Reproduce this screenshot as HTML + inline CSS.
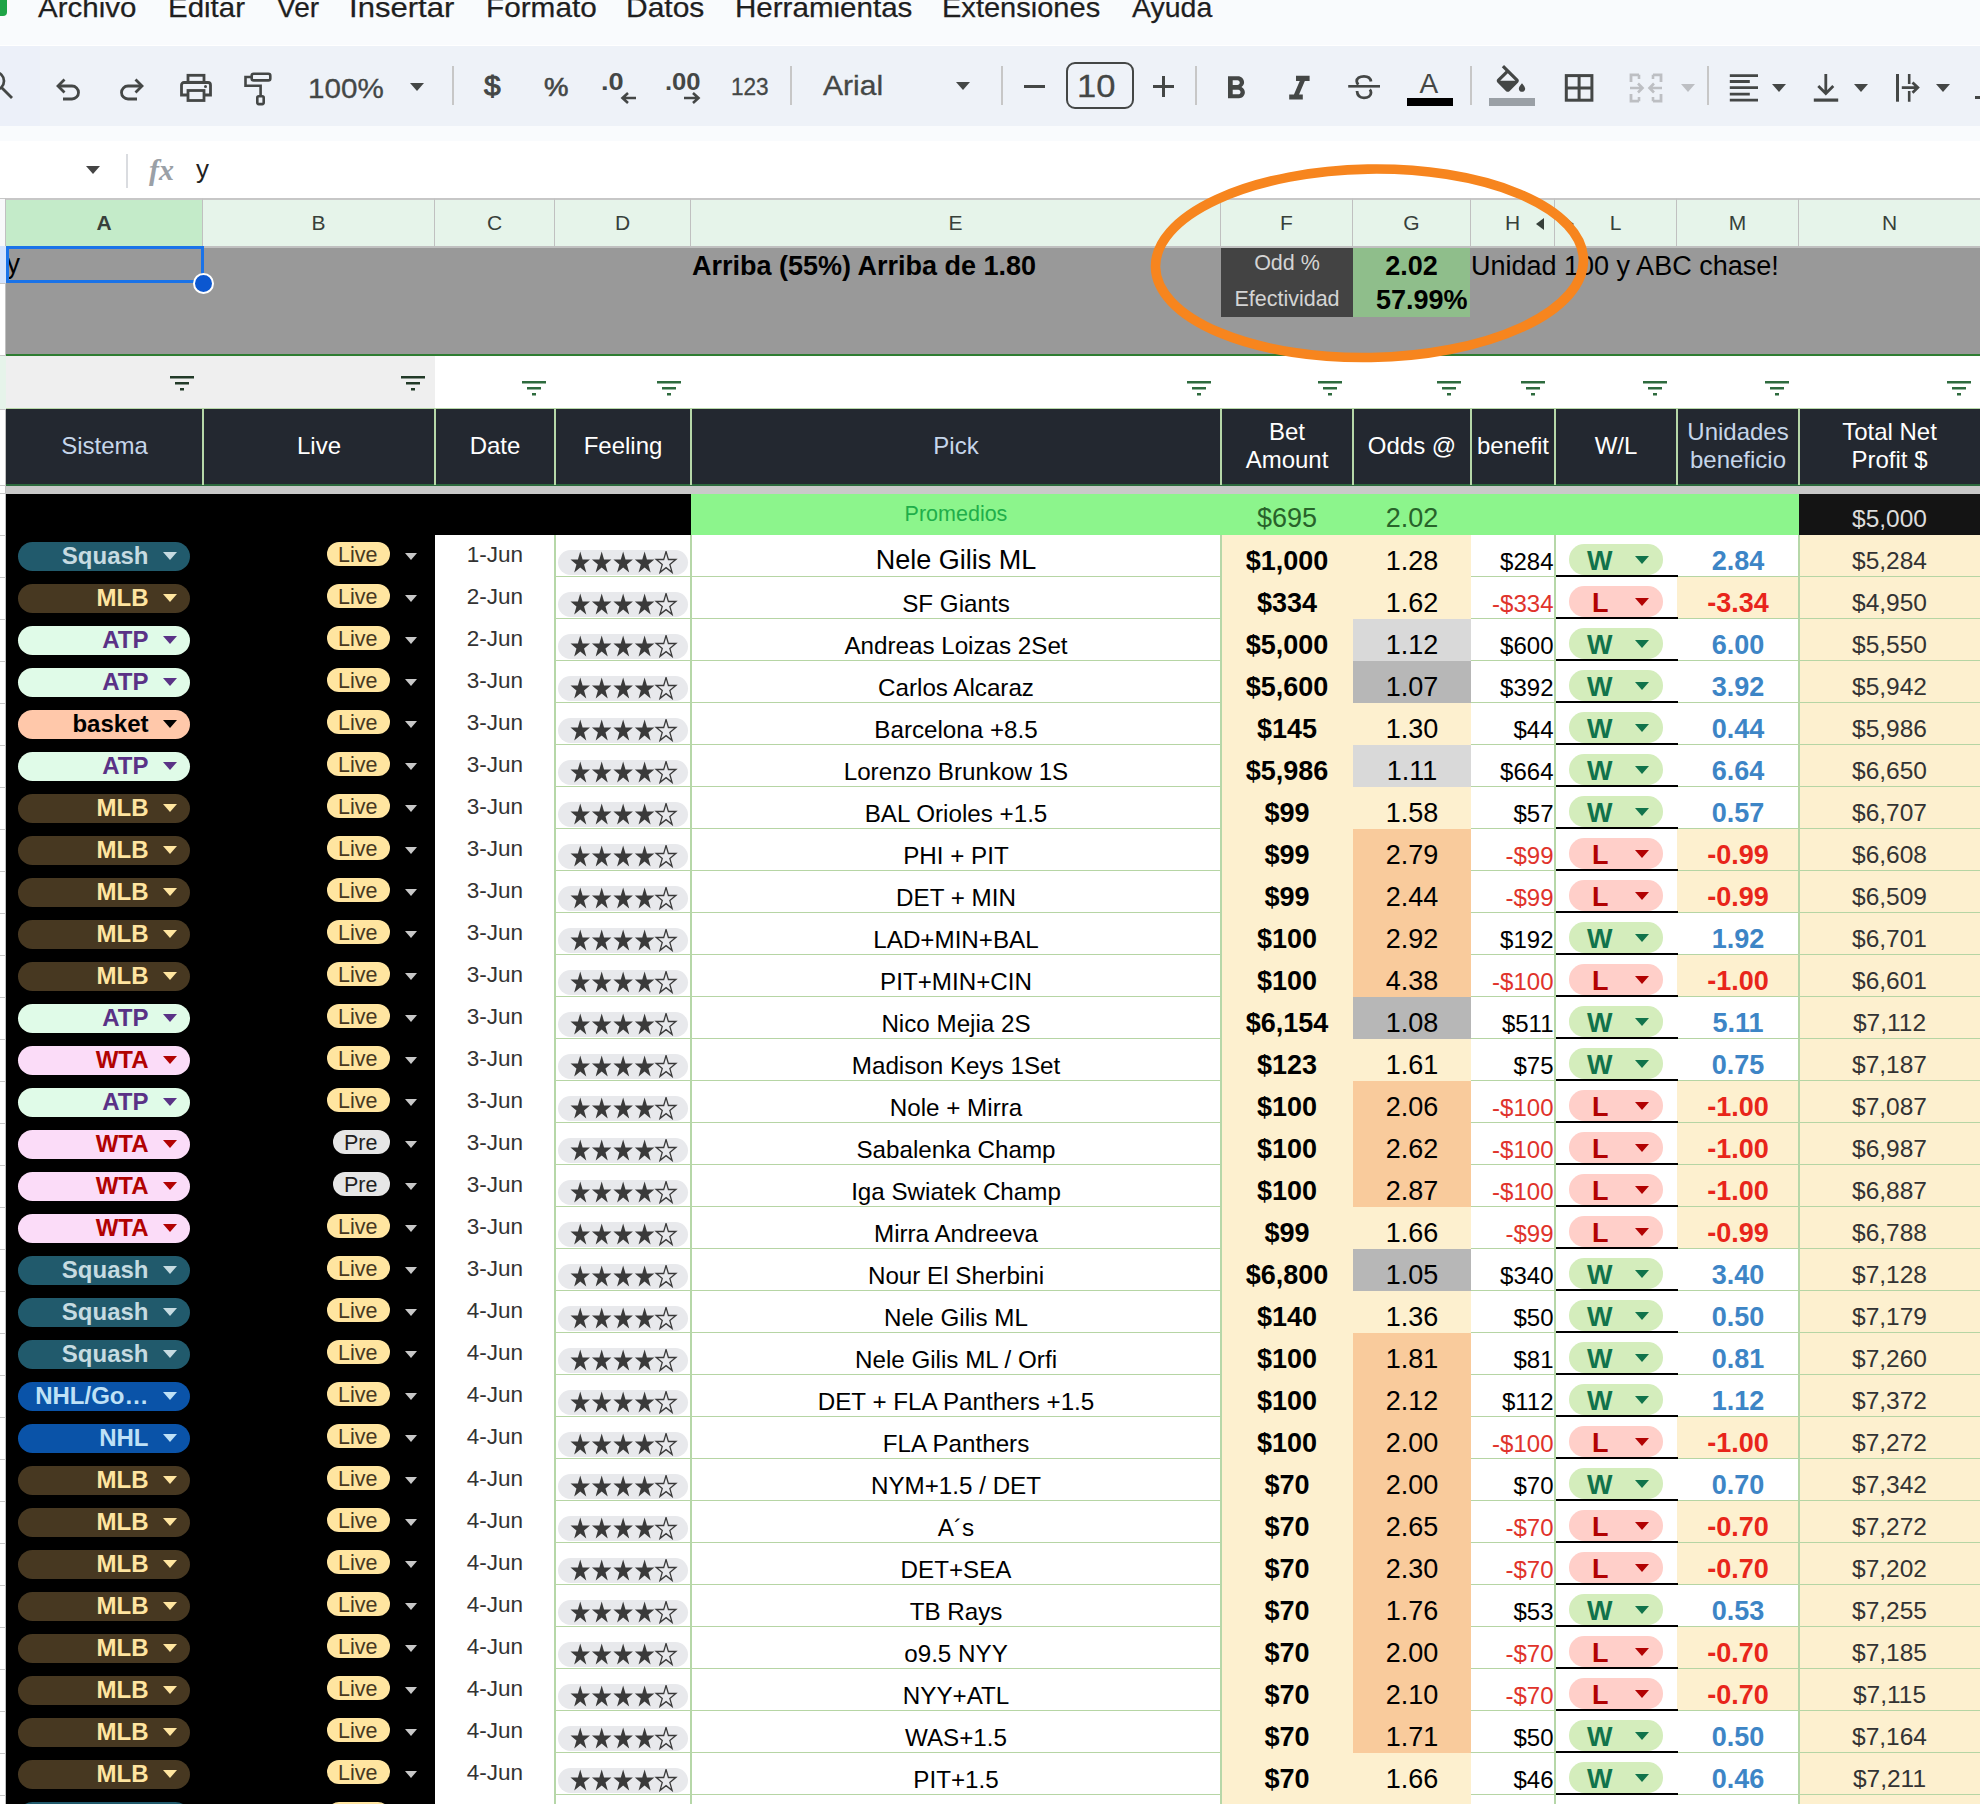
<!DOCTYPE html><html><head><meta charset="utf-8"><style>
*{box-sizing:border-box;margin:0;padding:0}
html,body{width:1980px;height:1804px;overflow:hidden;background:#fff}
body{position:relative;font-family:"Liberation Sans",sans-serif;color:#000}
.a{position:absolute}
.t{position:absolute;white-space:nowrap;line-height:1}
.menu{left:0;top:0;width:1980px;height:45px;background:#f9fbfd}
.tool{left:0;top:46px;width:1980px;height:79.5px;background:#eef2f8}
.gap{left:0;top:125.5px;width:1980px;height:15.5px;background:#f9fbfd}
.fbar{left:0;top:141px;width:1980px;height:57px;background:#fff}
.mi{top:-6.5px;font-size:28px;color:#1f1f1f;-webkit-text-stroke:0.25px #1f1f1f}
.sep{width:2px;background:#c7c7c7}
.ico{position:absolute}
.colh{top:198px;height:50px;background:#e6f4ea;border-top:2px solid #c7c7c7;border-bottom:2px solid #c0c0c0}
.colh span{position:absolute;left:0;right:0;top:12.2px;text-align:center;font-size:21px;color:#37403a;line-height:1}
.hd{top:409px;height:76px;background:#232830}
.hdt{position:absolute;left:0;right:0;text-align:center;font-size:24px;line-height:28px;color:#fff}
.pill{position:absolute;border-radius:16px}
.tri{position:absolute;width:0;height:0;border-left:7px solid transparent;border-right:7px solid transparent;border-top:8px solid}
.cell{position:absolute;text-align:center;white-space:nowrap;line-height:1}
</style></head><body><div class="a menu"></div>
<div class="a" style="left:0;top:0;width:7px;height:16px;background:#1ea446;border-radius:0 0 4px 0"></div>
<div class="t mi" style="left:38.30px;transform-origin:0 0;transform:scaleX(1.0543)">Archivo</div>
<div class="t mi" style="left:167.90px;transform-origin:0 0;transform:scaleX(1.0521)">Editar</div>
<div class="t mi" style="left:277.00px;transform-origin:0 0;transform:scaleX(1.0000)">Ver</div>
<div class="t mi" style="left:349.37px;transform-origin:0 0;transform:scaleX(1.1088)">Insertar</div>
<div class="t mi" style="left:485.58px;transform-origin:0 0;transform:scaleX(1.0624)">Formato</div>
<div class="t mi" style="left:626.46px;transform-origin:0 0;transform:scaleX(1.0714)">Datos</div>
<div class="t mi" style="left:734.69px;transform-origin:0 0;transform:scaleX(1.0552)">Herramientas</div>
<div class="t mi" style="left:942.43px;transform-origin:0 0;transform:scaleX(1.0369)">Extensiones</div>
<div class="t mi" style="left:1132.30px;transform-origin:0 0;transform:scaleX(1.0177)">Ayuda</div>
<div class="a tool"></div>
<div class="a gap"></div>
<div class="a" style="left:0;top:46px;width:40px;height:79.5px;background:#ecf0f9"></div>
<svg class="ico" style="left:-19px;top:67px" width="40" height="40" viewBox="0 0 40 40"><circle cx="14" cy="14" r="9" fill="none" stroke="#444746" stroke-width="2.7"/><line x1="20.5" y1="20.5" x2="31" y2="31" stroke="#444746" stroke-width="2.8"/></svg>
<svg class="ico" style="left:55px;top:77px" width="27" height="24" viewBox="0 0 27 24"><path d="M3.5 9 H17 a6.5 6.5 0 0 1 0 13 H8" fill="none" stroke="#444746" stroke-width="2.8"/><path d="M9.5 2.5 L3 9 L9.5 15.5" fill="none" stroke="#444746" stroke-width="2.8"/></svg>
<svg class="ico" style="left:118px;top:77px" width="27" height="24" viewBox="0 0 27 24"><path d="M23.5 9 H10 a6.5 6.5 0 0 0 0 13 H19" fill="none" stroke="#444746" stroke-width="2.8"/><path d="M17.5 2.5 L24 9 L17.5 15.5" fill="none" stroke="#444746" stroke-width="2.8"/></svg>
<svg class="ico" style="left:179px;top:73px" width="34" height="30" viewBox="0 0 34 30"><rect x="9" y="2.3" width="16" height="7" fill="none" stroke="#444746" stroke-width="2.8"/><path d="M8 22 H2.5 V12 a2.5 2.5 0 0 1 2.5-2.5 H29 a2.5 2.5 0 0 1 2.5 2.5 V22 H26" fill="none" stroke="#444746" stroke-width="2.8"/><rect x="9" y="17.5" width="16" height="10" fill="none" stroke="#444746" stroke-width="2.8"/><circle cx="26.5" cy="13.5" r="1.5" fill="#444746"/></svg>
<svg class="ico" style="left:243px;top:71px" width="32" height="36" viewBox="0 0 32 36"><rect x="8.7" y="2.7" width="18.6" height="6.7" rx="2" fill="none" stroke="#444746" stroke-width="2.6"/><path d="M8.7 6 H2.5 V14.7 H17.6 V24" fill="none" stroke="#444746" stroke-width="2.6"/><rect x="14.3" y="25.3" width="6.4" height="7.8" rx="1.5" fill="none" stroke="#444746" stroke-width="2.6"/></svg>
<div class="t" style="left:307.88px;top:75px;font-size:28px;color:#444746;transform-origin:0 0;transform:scaleX(1.0580);-webkit-text-stroke:0.3px #444746">100%</div>
<div class="tri" style="left:410px;top:83px;border-top-color:#444746"></div>
<div class="a sep" style="left:452px;top:66px;height:39px"></div>
<div class="a sep" style="left:790px;top:66px;height:39px"></div>
<div class="a sep" style="left:1001px;top:66px;height:39px"></div>
<div class="a sep" style="left:1195px;top:66px;height:39px"></div>
<div class="a sep" style="left:1470px;top:66px;height:39px"></div>
<div class="a sep" style="left:1707px;top:66px;height:39px"></div>
<div class="t" style="left:483.89px;top:73px;font-size:27px;color:#444746;transform-origin:0 0;transform:scaleX(1.1077);-webkit-text-stroke:0.9px #444746">$</div>
<div class="t" style="left:543.90px;top:75px;font-size:25px;color:#444746;transform-origin:0 0;transform:scaleX(1.1000);-webkit-text-stroke:0.6px #444746">%</div>
<div class="t" style="left:601.14px;top:71px;font-size:23px;color:#444746;transform-origin:0 0;transform:scaleX(1.1812);font-weight:bold">.0</div>
<svg class="ico" style="left:620px;top:92px" width="18" height="12" viewBox="0 0 18 12"><path d="M16 6 H3 M8 1 L2.5 6 L8 11" fill="none" stroke="#444746" stroke-width="2.6"/></svg>
<div class="t" style="left:665.47px;top:71px;font-size:23px;color:#444746;transform-origin:0 0;transform:scaleX(1.1138);font-weight:bold">.00</div>
<svg class="ico" style="left:683px;top:92px" width="18" height="12" viewBox="0 0 18 12"><path d="M1 6 H15 M10 1 L15.5 6 L10 11" fill="none" stroke="#444746" stroke-width="2.6"/></svg>
<div class="t" style="left:730.82px;top:75px;font-size:24px;color:#444746;transform-origin:0 0;transform:scaleX(0.9405);-webkit-text-stroke:0.3px #444746">123</div>
<div class="t" style="left:823.00px;top:72px;font-size:28px;color:#444746;transform-origin:0 0;transform:scaleX(1.0741);-webkit-text-stroke:0.3px #444746">Arial</div>
<div class="tri" style="left:956px;top:82px;border-top-color:#444746"></div>
<div class="a" style="left:1024px;top:85px;width:21px;height:3px;background:#444746"></div>
<div class="a" style="left:1066px;top:62px;width:68px;height:47px;border:2px solid #444746;border-radius:9px"></div>
<div class="t" style="left:1077.26px;top:71px;font-size:31.5px;color:#444746;transform-origin:0 0;transform:scaleX(1.0968);-webkit-text-stroke:0.3px #444746">10</div>
<svg class="ico" style="left:1152px;top:75px" width="23" height="23" viewBox="0 0 23 23"><path d="M11.5 1 V22 M1 11.5 H22" stroke="#444746" stroke-width="3"/></svg>
<svg class="ico" style="left:1216.6px;top:69.6px" width="37.7" height="37.7" viewBox="0 0 24 24"><path fill="#444746" d="M15.6 10.79c.97-.67 1.65-1.77 1.65-2.79 0-2.26-1.75-4-4-4H7v14h7.04c2.09 0 3.710-1.7 3.71-3.79 0-1.52-.86-2.82-2.15-3.42zM10 6.5h3c.83 0 1.5.67 1.5 1.5s-.67 1.5-1.5 1.5h-3v-3zm3.5 9H10v-3h3.5c.83 0 1.5.67 1.5 1.5s-.67 1.5-1.5 1.5z"/></svg>
<svg class="ico" style="left:1279.4px;top:69.1px" width="40.8" height="40.8" viewBox="0 0 24 24"><path fill="#444746" d="M10 4v3h2.21l-3.42 8H6v3h8v-3h-2.21l3.42-8H18V4z"/></svg>
<svg class="ico" style="left:1346px;top:73px" width="36" height="30" viewBox="1346 73 36 30"><path d="M1371 81.5 C1370.5 78 1367.5 76.3 1364 76.3 C1359.5 76.3 1356.7 78.5 1356.7 81.3 C1356.7 82.8 1357.5 83.8 1358.5 84.5" fill="none" stroke="#444746" stroke-width="2.8"/><path d="M1357 91 C1357.3 95.5 1360.2 97.8 1364 97.8 C1368.3 97.8 1371 95.8 1371 92.8 C1371 91.3 1370.6 90.3 1369.8 89.5" fill="none" stroke="#444746" stroke-width="2.8"/><rect x="1348.2" y="85" width="31.8" height="2.6" fill="#444746"/></svg>
<div class="t" style="left:1419.5px;top:69.5px;font-size:28px;color:#444746">A</div>
<div class="a" style="left:1407px;top:98px;width:46px;height:8px;background:#000"></div>
<svg class="ico" style="left:1492px;top:65px" width="37.9" height="37.9" viewBox="0 0 24 24"><path fill="#444746" d="M16.56 8.94L7.62 0 6.21 1.41l2.38 2.38-5.15 5.15c-.59.59-.59 1.54 0 2.12l5.5 5.5c.29.29.68.44 1.06.44s.77-.15 1.06-.44l5.5-5.5c.59-.58.59-1.530 0-2.12zM5.21 10L10 5.21 14.79 10H5.21zM19 11.5s-2 2.17-2 3.5c0 1.1.9 2 2 2s2-.9 2-2c0-1.33-2-3.5-2-3.5z"/></svg>
<div class="a" style="left:1489px;top:98px;width:46px;height:8px;background:#9aa0a6"></div>
<svg class="ico" style="left:1564px;top:73px" width="30" height="30" viewBox="0 0 30 30"><rect x="2.3" y="2.6" width="25.6" height="24.6" fill="none" stroke="#444746" stroke-width="3"/><path d="M15.1 2.6 V27.2 M2.3 14.9 H27.9" stroke="#444746" stroke-width="3"/></svg>
<svg class="ico" style="left:1629px;top:73px" width="34" height="30" viewBox="0 0 34 30"><path d="M2 9 V1.8 H10 M2 21 V28.2 H10 M32 9 V1.8 H24 M32 21 V28.2 H24" fill="none" stroke="#bdbfc3" stroke-width="2.8"/><path d="M1 15 H13 M9 10.5 L13.5 15 L9 19.5 M33 15 H21 M25 10.5 L20.5 15 L25 19.5" fill="none" stroke="#bdbfc3" stroke-width="2.6"/><path d="M10 1.8 V6 M24 1.8 V6 M10 28.2 V24 M24 28.2 V24" stroke="#bdbfc3" stroke-width="2.6"/></svg>
<div class="tri" style="left:1680.5px;top:83.5px;border-left-width:7.5px;border-right-width:7.5px;border-top-color:#bdbfc3"></div>
<svg class="ico" style="left:1729px;top:73px" width="30" height="30" viewBox="0 0 30 30"><path d="M0.8 2.6 H29 M0.8 8.5 H20.8 M0.8 14.6 H29 M0.8 21.1 H20.8 M0.8 27.2 H29" stroke="#444746" stroke-width="2.8"/></svg>
<div class="tri" style="left:1772px;top:83.5px;border-left-width:7.9px;border-right-width:7.9px;border-top-color:#444746"></div>
<svg class="ico" style="left:1812px;top:72px" width="28" height="32" viewBox="0 0 28 32"><path d="M13.8 2 V21 M6.3 14 L13.8 21.5 L21.3 14" fill="none" stroke="#444746" stroke-width="2.8"/><path d="M1.8 28.1 H26.2" stroke="#444746" stroke-width="3.2"/></svg>
<div class="tri" style="left:1854px;top:83.5px;border-left-width:7.8px;border-right-width:7.8px;border-top-color:#444746"></div>
<svg class="ico" style="left:1893px;top:72px" width="30" height="32" viewBox="0 0 30 32"><path d="M4.5 2 V29.7" stroke="#444746" stroke-width="3"/><path d="M16.2 2 V12 M16.2 19 V29.7" stroke="#444746" stroke-width="2.6"/><path d="M8.8 15.6 H24.5 M19.5 10.5 L24.8 15.6 L19.5 20.7" fill="none" stroke="#444746" stroke-width="2.8"/></svg>
<div class="tri" style="left:1936px;top:83.5px;border-left-width:7.6px;border-right-width:7.6px;border-top-color:#444746"></div>
<div class="a" style="left:1975px;top:96px;width:5px;height:3px;background:#444746"></div>
<div class="a fbar"></div>
<div class="tri" style="left:86px;top:166px;border-top-color:#444"></div>
<div class="a" style="left:126px;top:154px;width:2px;height:34px;background:#dadce0"></div>
<div class="t" style="left:149px;top:155px;font-size:30px;color:#9aa0a6;font-family:'Liberation Serif',serif;font-style:italic;font-weight:bold">fx</div>
<div class="t" style="left:196px;top:156px;font-size:26px;color:#1f1f1f">y</div>
<div class="a" style="left:0;top:198px;width:6px;height:48px;background:#f8f9fa;border-right:1px solid #c0c0c0;border-top:1px solid #c7c7c7"></div>
<div class="a colh" style="left:6px;width:197px;background:#c4ebc9;border-right:1px solid #c0c0c0"><span style="font-weight:bold">A</span></div>
<div class="a colh" style="left:203px;width:232px;background:#e6f4ea;border-right:1px solid #c0c0c0"><span style="font-weight:normal">B</span></div>
<div class="a colh" style="left:435px;width:120px;background:#e6f4ea;border-right:1px solid #c0c0c0"><span style="font-weight:normal">C</span></div>
<div class="a colh" style="left:555px;width:136px;background:#e6f4ea;border-right:1px solid #c0c0c0"><span style="font-weight:normal">D</span></div>
<div class="a colh" style="left:691px;width:530px;background:#e6f4ea;border-right:1px solid #c0c0c0"><span style="font-weight:normal">E</span></div>
<div class="a colh" style="left:1221px;width:132px;background:#e6f4ea;border-right:1px solid #c0c0c0"><span style="font-weight:normal">F</span></div>
<div class="a colh" style="left:1353px;width:118px;background:#e6f4ea;border-right:1px solid #c0c0c0"><span style="font-weight:normal">G</span></div>
<div class="a colh" style="left:1471px;width:84px;background:#e6f4ea;border-right:1px solid #c0c0c0"><span style="font-weight:normal">H</span></div>
<div class="a colh" style="left:1555px;width:122px;background:#e6f4ea;border-right:1px solid #c0c0c0"><span style="font-weight:normal">L</span></div>
<div class="a colh" style="left:1677px;width:122px;background:#e6f4ea;border-right:1px solid #c0c0c0"><span style="font-weight:normal">M</span></div>
<div class="a colh" style="left:1799px;width:181px;background:#e6f4ea;border-right:0"><span style="font-weight:normal">N</span></div>
<div class="a" style="left:1536.3px;top:218px;width:0;height:0;border-top:6.4px solid transparent;border-bottom:6.4px solid transparent;border-right:8.2px solid #37403a"></div>
<div class="a" style="left:1566px;top:218px;width:0;height:0;border-top:6.4px solid transparent;border-bottom:6.4px solid transparent;border-left:8.2px solid #37403a"></div>
<div class="a" style="left:0;top:246px;width:6px;height:1558px;background:#fff;border-right:1px solid #c0c0c0"></div>
<div class="a" style="left:0;top:246px;width:6px;height:37px;background:#d3e3fd"></div>
<div class="a" style="left:0;top:355px;width:6px;height:54px;background:#e6f4ea"></div>
<div class="a" style="left:0;top:283px;width:6px;height:1px;background:#c7c7c7"></div>
<div class="a" style="left:0;top:355px;width:6px;height:1px;background:#c7c7c7"></div>
<div class="a" style="left:0;top:409px;width:6px;height:1px;background:#c7c7c7"></div>
<div class="a" style="left:0;top:485px;width:6px;height:1px;background:#c7c7c7"></div>
<div class="a" style="left:0;top:493px;width:6px;height:1px;background:#c7c7c7"></div>
<div class="a" style="left:0;top:535px;width:6px;height:1px;background:#c7c7c7"></div>
<div class="a" style="left:0;top:577px;width:6px;height:1px;background:#c7c7c7"></div>
<div class="a" style="left:0;top:619px;width:6px;height:1px;background:#c7c7c7"></div>
<div class="a" style="left:0;top:661px;width:6px;height:1px;background:#c7c7c7"></div>
<div class="a" style="left:0;top:703px;width:6px;height:1px;background:#c7c7c7"></div>
<div class="a" style="left:0;top:745px;width:6px;height:1px;background:#c7c7c7"></div>
<div class="a" style="left:0;top:787px;width:6px;height:1px;background:#c7c7c7"></div>
<div class="a" style="left:0;top:829px;width:6px;height:1px;background:#c7c7c7"></div>
<div class="a" style="left:0;top:871px;width:6px;height:1px;background:#c7c7c7"></div>
<div class="a" style="left:0;top:913px;width:6px;height:1px;background:#c7c7c7"></div>
<div class="a" style="left:0;top:955px;width:6px;height:1px;background:#c7c7c7"></div>
<div class="a" style="left:0;top:997px;width:6px;height:1px;background:#c7c7c7"></div>
<div class="a" style="left:0;top:1039px;width:6px;height:1px;background:#c7c7c7"></div>
<div class="a" style="left:0;top:1081px;width:6px;height:1px;background:#c7c7c7"></div>
<div class="a" style="left:0;top:1123px;width:6px;height:1px;background:#c7c7c7"></div>
<div class="a" style="left:0;top:1165px;width:6px;height:1px;background:#c7c7c7"></div>
<div class="a" style="left:0;top:1207px;width:6px;height:1px;background:#c7c7c7"></div>
<div class="a" style="left:0;top:1249px;width:6px;height:1px;background:#c7c7c7"></div>
<div class="a" style="left:0;top:1291px;width:6px;height:1px;background:#c7c7c7"></div>
<div class="a" style="left:0;top:1333px;width:6px;height:1px;background:#c7c7c7"></div>
<div class="a" style="left:0;top:1375px;width:6px;height:1px;background:#c7c7c7"></div>
<div class="a" style="left:0;top:1417px;width:6px;height:1px;background:#c7c7c7"></div>
<div class="a" style="left:0;top:1459px;width:6px;height:1px;background:#c7c7c7"></div>
<div class="a" style="left:0;top:1501px;width:6px;height:1px;background:#c7c7c7"></div>
<div class="a" style="left:0;top:1543px;width:6px;height:1px;background:#c7c7c7"></div>
<div class="a" style="left:0;top:1585px;width:6px;height:1px;background:#c7c7c7"></div>
<div class="a" style="left:0;top:1627px;width:6px;height:1px;background:#c7c7c7"></div>
<div class="a" style="left:0;top:1669px;width:6px;height:1px;background:#c7c7c7"></div>
<div class="a" style="left:0;top:1711px;width:6px;height:1px;background:#c7c7c7"></div>
<div class="a" style="left:0;top:1753px;width:6px;height:1px;background:#c7c7c7"></div>
<div class="a" style="left:0;top:1795px;width:6px;height:1px;background:#c7c7c7"></div>
<div class="a" style="left:6px;top:248px;width:1974px;height:106px;background:#999999"></div>
<div class="a" style="left:6px;top:354px;width:1974px;height:2px;background:#2e7d32"></div>
<div class="t" style="left:6.5px;top:250.6px;font-size:27px;color:#000">y</div>
<div class="t" style="left:692px;top:252.6px;font-size:27px;font-weight:bold;color:#000">Arriba (55%) Arriba de 1.80</div>
<div class="a" style="left:1221px;top:248px;width:132px;height:69px;background:#434343"></div>
<div class="a" style="left:1353px;top:248px;width:117px;height:69px;background:#8fbe8b"></div>
<div class="cell" style="left:1221px;width:132px;top:252.8px;font-size:21.5px;color:#d4d4d4">Odd %</div>
<div class="cell" style="left:1221px;width:132px;top:289.3px;font-size:21.5px;color:#d4d4d4">Efectividad</div>
<div class="cell" style="left:1353px;width:117px;top:252.6px;font-size:27px;font-weight:bold">2.02</div>
<div class="t" style="left:1376px;top:287.4px;font-size:27px;font-weight:bold">57.99%</div>
<div class="t" style="left:1471px;top:252.6px;font-size:27px;color:#000">Unidad 100 y ABC chase!</div>
<div class="a" style="left:6px;top:246px;width:198px;height:37px;border:3px solid #1a73e8"></div>
<div class="a" style="left:193px;top:273px;width:21px;height:21px;border-radius:50%;background:#0b57d0;border:2.5px solid #fff"></div>
<div class="a" style="left:6px;top:356px;width:429px;height:53px;background:#efefef"></div>
<div class="a" style="left:6px;top:408px;width:1974px;height:2px;background:#b6d7a8"></div>
<svg class="ico" style="left:170px;top:376px" width="25" height="15" viewBox="0 0 25 15"><path d="M0 1.2 H24 M5 7.2 H19 M10 13.2 H14" stroke="#223a28" stroke-width="2.4"/></svg>
<svg class="ico" style="left:401px;top:376px" width="25" height="15" viewBox="0 0 25 15"><path d="M0 1.2 H24 M5 7.2 H19 M10 13.2 H14" stroke="#223a28" stroke-width="2.4"/></svg>
<svg class="ico" style="left:522px;top:381px" width="25" height="15" viewBox="0 0 25 15"><path d="M0 1.2 H24 M5 7.2 H19 M10 13.2 H14" stroke="#2e6b3e" stroke-width="2.4"/></svg>
<svg class="ico" style="left:657px;top:381px" width="25" height="15" viewBox="0 0 25 15"><path d="M0 1.2 H24 M5 7.2 H19 M10 13.2 H14" stroke="#2e6b3e" stroke-width="2.4"/></svg>
<svg class="ico" style="left:1187px;top:381px" width="25" height="15" viewBox="0 0 25 15"><path d="M0 1.2 H24 M5 7.2 H19 M10 13.2 H14" stroke="#2e6b3e" stroke-width="2.4"/></svg>
<svg class="ico" style="left:1318px;top:381px" width="25" height="15" viewBox="0 0 25 15"><path d="M0 1.2 H24 M5 7.2 H19 M10 13.2 H14" stroke="#2e6b3e" stroke-width="2.4"/></svg>
<svg class="ico" style="left:1437px;top:381px" width="25" height="15" viewBox="0 0 25 15"><path d="M0 1.2 H24 M5 7.2 H19 M10 13.2 H14" stroke="#2e6b3e" stroke-width="2.4"/></svg>
<svg class="ico" style="left:1521px;top:381px" width="25" height="15" viewBox="0 0 25 15"><path d="M0 1.2 H24 M5 7.2 H19 M10 13.2 H14" stroke="#2e6b3e" stroke-width="2.4"/></svg>
<svg class="ico" style="left:1643px;top:381px" width="25" height="15" viewBox="0 0 25 15"><path d="M0 1.2 H24 M5 7.2 H19 M10 13.2 H14" stroke="#2e6b3e" stroke-width="2.4"/></svg>
<svg class="ico" style="left:1765px;top:381px" width="25" height="15" viewBox="0 0 25 15"><path d="M0 1.2 H24 M5 7.2 H19 M10 13.2 H14" stroke="#2e6b3e" stroke-width="2.4"/></svg>
<svg class="ico" style="left:1947px;top:381px" width="25" height="15" viewBox="0 0 25 15"><path d="M0 1.2 H24 M5 7.2 H19 M10 13.2 H14" stroke="#2e6b3e" stroke-width="2.4"/></svg>
<div class="a hd" style="left:6px;width:1974px"></div>
<div class="a" style="left:6px;top:484px;width:1974px;height:2px;background:#2d6a3e"></div>
<div class="a" style="left:6px;top:486px;width:1974px;height:8px;background:#c9c9c9"></div>
<div class="hdt" style="left:6px;width:197px;top:431.5px;color:#c6d6ea">Sistema</div>
<div class="hdt" style="left:203px;width:232px;top:431.5px;color:#fff">Live</div>
<div class="hdt" style="left:435px;width:120px;top:431.5px;color:#fff">Date</div>
<div class="hdt" style="left:555px;width:136px;top:431.5px;color:#fff">Feeling</div>
<div class="hdt" style="left:691px;width:530px;top:431.5px;color:#c6d6ea">Pick</div>
<div class="hdt" style="left:1221px;width:132px;top:417.5px;color:#fff">Bet<br>Amount</div>
<div class="hdt" style="left:1353px;width:118px;top:431.5px;color:#fff">Odds @</div>
<div class="hdt" style="left:1471px;width:84px;top:431.5px;color:#fff">benefit</div>
<div class="hdt" style="left:1555px;width:122px;top:431.5px;color:#fff">W/L</div>
<div class="hdt" style="left:1677px;width:122px;top:417.5px;color:#c6d6ea">Unidades<br>beneficio</div>
<div class="hdt" style="left:1799px;width:181px;top:417.5px;color:#fff">Total Net<br>Profit $</div>
<div class="a" style="left:202px;top:409px;width:2px;height:76px;background:#b6d7a8"></div>
<div class="a" style="left:434px;top:409px;width:2px;height:76px;background:#b6d7a8"></div>
<div class="a" style="left:554px;top:409px;width:2px;height:76px;background:#b6d7a8"></div>
<div class="a" style="left:690px;top:409px;width:2px;height:76px;background:#b6d7a8"></div>
<div class="a" style="left:1220px;top:409px;width:2px;height:76px;background:#b6d7a8"></div>
<div class="a" style="left:1352px;top:409px;width:2px;height:76px;background:#b6d7a8"></div>
<div class="a" style="left:1470px;top:409px;width:2px;height:76px;background:#b6d7a8"></div>
<div class="a" style="left:1554px;top:409px;width:2px;height:76px;background:#b6d7a8"></div>
<div class="a" style="left:1676px;top:409px;width:2px;height:76px;background:#b6d7a8"></div>
<div class="a" style="left:1798px;top:409px;width:2px;height:76px;background:#b6d7a8"></div>
<div class="a" style="left:6px;top:494px;width:685px;height:41px;background:#000"></div>
<div class="a" style="left:691px;top:494px;width:1108px;height:41px;background:#8cf58c"></div>
<div class="a" style="left:1799px;top:494px;width:181px;height:41px;background:#141414"></div>
<div class="cell" style="left:691px;width:530px;top:503.9px;font-size:21.5px;color:#1fae4a">Promedios</div>
<div class="cell" style="left:1221px;width:132px;top:504.8px;font-size:27px;color:#28632a">$695</div>
<div class="cell" style="left:1353px;width:118px;top:504.8px;font-size:27px;color:#28632a">2.02</div>
<div class="cell" style="left:1799px;width:181px;top:507px;font-size:24.5px;color:#dcdcdc">$5,000</div>
<div class="a" style="left:6px;top:535px;width:429px;height:1269px;background:#000"></div>
<div class="a" style="left:435px;top:535px;width:786px;height:42px;background:#fff"></div>
<div class="a" style="left:1221px;top:535px;width:132px;height:42px;background:#fdf0cf"></div>
<div class="a" style="left:1353px;top:535px;width:118px;height:42px;background:#fdf0cf"></div>
<div class="a" style="left:1471px;top:535px;width:84px;height:42px;background:#fff"></div>
<div class="a" style="left:1555px;top:535px;width:122px;height:42px;background:#fff"></div>
<div class="a" style="left:1677px;top:535px;width:122px;height:42px;background:#fff"></div>
<div class="a" style="left:1799px;top:535px;width:181px;height:42px;background:#fdf0cf"></div>
<div class="a" style="left:555px;top:576.2px;width:666px;height:1.8px;background:#b6d5a4"></div>
<div class="a" style="left:1471px;top:576.2px;width:84px;height:1.8px;background:#b6d5a4"></div>
<div class="a" style="left:1677px;top:576.2px;width:303px;height:1.8px;background:#b6d5a4"></div>
<div class="a" style="left:1554px;top:575px;width:124px;height:3px;background:#000"></div>
<div class="pill" style="left:18px;top:542px;width:172px;height:29px;background:#215a6c;border-radius:14.5px"></div>
<div class="t" style="right:1831.5px;top:543.8px;font-size:24px;font-weight:bold;color:#c6dbe1">Squash</div>
<div class="tri" style="left:162.5px;top:552.2px;border-left-width:7.1px;border-right-width:7.1px;border-top-width:8px;border-top-color:#c6dbe1"></div>
<div class="pill" style="left:327px;top:542px;width:63px;height:23.6px;background:#ffe5a0;border-radius:12px"></div>
<div class="t" style="left:338px;top:544.9px;font-size:21.5px;color:#473821">Live</div>
<div class="tri" style="left:405px;top:553px;border-left-width:6.15px;border-right-width:6.15px;border-top-width:7px;border-top-color:#c8c8c8"></div>
<div class="cell" style="left:435px;width:120px;top:543.5px;font-size:22.5px;color:#333">1-Jun</div>
<div class="pill" style="left:558px;top:550px;width:130px;height:25px;background:#e8e9ec;border-radius:13px"></div>
<svg class="ico" style="left:570px;top:551.3px" width="108" height="23" viewBox="-0.5 -0.5 108 23"><path transform="translate(0.0,0) scale(0.975,1.1)" d="M10 0 L12.4 7.2 L20 7.3 L13.9 11.8 L16.2 19 L10 14.6 L3.8 19 L6.1 11.8 L0 7.3 L7.6 7.2 Z" fill="#3a3a3a" stroke="#3a3a3a" stroke-width="0"/><path transform="translate(21.45,0) scale(0.975,1.1)" d="M10 0 L12.4 7.2 L20 7.3 L13.9 11.8 L16.2 19 L10 14.6 L3.8 19 L6.1 11.8 L0 7.3 L7.6 7.2 Z" fill="#3a3a3a" stroke="#3a3a3a" stroke-width="0"/><path transform="translate(42.9,0) scale(0.975,1.1)" d="M10 0 L12.4 7.2 L20 7.3 L13.9 11.8 L16.2 19 L10 14.6 L3.8 19 L6.1 11.8 L0 7.3 L7.6 7.2 Z" fill="#3a3a3a" stroke="#3a3a3a" stroke-width="0"/><path transform="translate(64.35,0) scale(0.975,1.1)" d="M10 0 L12.4 7.2 L20 7.3 L13.9 11.8 L16.2 19 L10 14.6 L3.8 19 L6.1 11.8 L0 7.3 L7.6 7.2 Z" fill="#3a3a3a" stroke="#3a3a3a" stroke-width="0"/><path transform="translate(85.8,0) scale(0.975,1.1)" d="M10 0 L12.4 7.2 L20 7.3 L13.9 11.8 L16.2 19 L10 14.6 L3.8 19 L6.1 11.8 L0 7.3 L7.6 7.2 Z" fill="none" stroke="#3a3a3a" stroke-width="1.3"/></svg>
<div class="cell" style="left:691px;width:530px;top:547.44px;font-size:27px;color:#000">Nele Gilis ML</div>
<div class="cell" style="left:1221px;width:132px;top:548.1px;font-size:27px;font-weight:bold;color:#000">$1,000</div>
<div class="cell" style="left:1353px;width:118px;top:548px;font-size:27px;color:#000">1.28</div>
<div class="t" style="right:426.5px;top:550.2px;font-size:24px;color:#000">$284</div>
<div class="pill" style="left:1568.5px;top:544.2px;width:94.5px;height:30.4px;background:#d4edbc;border-radius:15.2px"></div>
<div class="t" style="left:1587px;top:547.6px;font-size:27px;font-weight:bold;color:#11734b">W</div>
<div class="tri" style="left:1635px;top:556px;border-left-width:7.8px;border-right-width:7.8px;border-top-width:8.7px;border-top-color:#11734b"></div>
<div class="cell" style="left:1677px;width:122px;top:547.6px;font-size:27px;font-weight:bold;color:#3d85c6">2.84</div>
<div class="cell" style="left:1799px;width:181px;top:549.4px;font-size:24.5px;color:#333">$5,284</div>
<div class="a" style="left:435px;top:577px;width:786px;height:42px;background:#fff"></div>
<div class="a" style="left:1221px;top:577px;width:132px;height:42px;background:#fdf0cf"></div>
<div class="a" style="left:1353px;top:577px;width:118px;height:42px;background:#fdf0cf"></div>
<div class="a" style="left:1471px;top:577px;width:84px;height:42px;background:#fff"></div>
<div class="a" style="left:1555px;top:577px;width:122px;height:42px;background:#fff"></div>
<div class="a" style="left:1677px;top:577px;width:122px;height:42px;background:#fdf0cf"></div>
<div class="a" style="left:1799px;top:577px;width:181px;height:42px;background:#fdf0cf"></div>
<div class="a" style="left:555px;top:618.2px;width:666px;height:1.8px;background:#b6d5a4"></div>
<div class="a" style="left:1471px;top:618.2px;width:84px;height:1.8px;background:#b6d5a4"></div>
<div class="a" style="left:1677px;top:618.2px;width:303px;height:1.8px;background:#b6d5a4"></div>
<div class="a" style="left:1554px;top:617px;width:124px;height:3px;background:#000"></div>
<div class="pill" style="left:18px;top:584px;width:172px;height:29px;background:#473821;border-radius:14.5px"></div>
<div class="t" style="right:1831.5px;top:585.8px;font-size:24px;font-weight:bold;color:#ffe5a0">MLB</div>
<div class="tri" style="left:162.5px;top:594.2px;border-left-width:7.1px;border-right-width:7.1px;border-top-width:8px;border-top-color:#ffe5a0"></div>
<div class="pill" style="left:327px;top:584px;width:63px;height:23.6px;background:#ffe5a0;border-radius:12px"></div>
<div class="t" style="left:338px;top:586.9px;font-size:21.5px;color:#473821">Live</div>
<div class="tri" style="left:405px;top:595px;border-left-width:6.15px;border-right-width:6.15px;border-top-width:7px;border-top-color:#c8c8c8"></div>
<div class="cell" style="left:435px;width:120px;top:585.5px;font-size:22.5px;color:#333">2-Jun</div>
<div class="pill" style="left:558px;top:592px;width:130px;height:25px;background:#e8e9ec;border-radius:13px"></div>
<svg class="ico" style="left:570px;top:593.3px" width="108" height="23" viewBox="-0.5 -0.5 108 23"><path transform="translate(0.0,0) scale(0.975,1.1)" d="M10 0 L12.4 7.2 L20 7.3 L13.9 11.8 L16.2 19 L10 14.6 L3.8 19 L6.1 11.8 L0 7.3 L7.6 7.2 Z" fill="#3a3a3a" stroke="#3a3a3a" stroke-width="0"/><path transform="translate(21.45,0) scale(0.975,1.1)" d="M10 0 L12.4 7.2 L20 7.3 L13.9 11.8 L16.2 19 L10 14.6 L3.8 19 L6.1 11.8 L0 7.3 L7.6 7.2 Z" fill="#3a3a3a" stroke="#3a3a3a" stroke-width="0"/><path transform="translate(42.9,0) scale(0.975,1.1)" d="M10 0 L12.4 7.2 L20 7.3 L13.9 11.8 L16.2 19 L10 14.6 L3.8 19 L6.1 11.8 L0 7.3 L7.6 7.2 Z" fill="#3a3a3a" stroke="#3a3a3a" stroke-width="0"/><path transform="translate(64.35,0) scale(0.975,1.1)" d="M10 0 L12.4 7.2 L20 7.3 L13.9 11.8 L16.2 19 L10 14.6 L3.8 19 L6.1 11.8 L0 7.3 L7.6 7.2 Z" fill="#3a3a3a" stroke="#3a3a3a" stroke-width="0"/><path transform="translate(85.8,0) scale(0.975,1.1)" d="M10 0 L12.4 7.2 L20 7.3 L13.9 11.8 L16.2 19 L10 14.6 L3.8 19 L6.1 11.8 L0 7.3 L7.6 7.2 Z" fill="none" stroke="#3a3a3a" stroke-width="1.3"/></svg>
<div class="cell" style="left:691px;width:530px;top:591.81px;font-size:24.2px;color:#000">SF Giants</div>
<div class="cell" style="left:1221px;width:132px;top:590.1px;font-size:27px;font-weight:bold;color:#000">$334</div>
<div class="cell" style="left:1353px;width:118px;top:590px;font-size:27px;color:#000">1.62</div>
<div class="t" style="right:426.5px;top:592.2px;font-size:24px;color:#e0332b">-$334</div>
<div class="pill" style="left:1568.5px;top:586.2px;width:94.5px;height:30.4px;background:#ffcfc9;border-radius:15.2px"></div>
<div class="t" style="left:1592px;top:589.6px;font-size:27px;font-weight:bold;color:#b10202">L</div>
<div class="tri" style="left:1635px;top:598px;border-left-width:7.8px;border-right-width:7.8px;border-top-width:8.7px;border-top-color:#b10202"></div>
<div class="cell" style="left:1677px;width:122px;top:589.6px;font-size:27px;font-weight:bold;color:#e8251a">-3.34</div>
<div class="cell" style="left:1799px;width:181px;top:591.4px;font-size:24.5px;color:#333">$4,950</div>
<div class="a" style="left:435px;top:619px;width:786px;height:42px;background:#fff"></div>
<div class="a" style="left:1221px;top:619px;width:132px;height:42px;background:#fdf0cf"></div>
<div class="a" style="left:1353px;top:619px;width:118px;height:42px;background:#d9d9d9"></div>
<div class="a" style="left:1471px;top:619px;width:84px;height:42px;background:#fff"></div>
<div class="a" style="left:1555px;top:619px;width:122px;height:42px;background:#fff"></div>
<div class="a" style="left:1677px;top:619px;width:122px;height:42px;background:#fff"></div>
<div class="a" style="left:1799px;top:619px;width:181px;height:42px;background:#fdf0cf"></div>
<div class="a" style="left:555px;top:660.2px;width:666px;height:1.8px;background:#b6d5a4"></div>
<div class="a" style="left:1471px;top:660.2px;width:84px;height:1.8px;background:#b6d5a4"></div>
<div class="a" style="left:1677px;top:660.2px;width:303px;height:1.8px;background:#b6d5a4"></div>
<div class="a" style="left:1554px;top:659px;width:124px;height:3px;background:#000"></div>
<div class="pill" style="left:18px;top:626px;width:172px;height:29px;background:#e0fbe8;border-radius:14.5px"></div>
<div class="t" style="right:1831.5px;top:627.8px;font-size:24px;font-weight:bold;color:#5a3286">ATP</div>
<div class="tri" style="left:162.5px;top:636.2px;border-left-width:7.1px;border-right-width:7.1px;border-top-width:8px;border-top-color:#5a3286"></div>
<div class="pill" style="left:327px;top:626px;width:63px;height:23.6px;background:#ffe5a0;border-radius:12px"></div>
<div class="t" style="left:338px;top:628.9px;font-size:21.5px;color:#473821">Live</div>
<div class="tri" style="left:405px;top:637px;border-left-width:6.15px;border-right-width:6.15px;border-top-width:7px;border-top-color:#c8c8c8"></div>
<div class="cell" style="left:435px;width:120px;top:627.5px;font-size:22.5px;color:#333">2-Jun</div>
<div class="pill" style="left:558px;top:634px;width:130px;height:25px;background:#e8e9ec;border-radius:13px"></div>
<svg class="ico" style="left:570px;top:635.3px" width="108" height="23" viewBox="-0.5 -0.5 108 23"><path transform="translate(0.0,0) scale(0.975,1.1)" d="M10 0 L12.4 7.2 L20 7.3 L13.9 11.8 L16.2 19 L10 14.6 L3.8 19 L6.1 11.8 L0 7.3 L7.6 7.2 Z" fill="#3a3a3a" stroke="#3a3a3a" stroke-width="0"/><path transform="translate(21.45,0) scale(0.975,1.1)" d="M10 0 L12.4 7.2 L20 7.3 L13.9 11.8 L16.2 19 L10 14.6 L3.8 19 L6.1 11.8 L0 7.3 L7.6 7.2 Z" fill="#3a3a3a" stroke="#3a3a3a" stroke-width="0"/><path transform="translate(42.9,0) scale(0.975,1.1)" d="M10 0 L12.4 7.2 L20 7.3 L13.9 11.8 L16.2 19 L10 14.6 L3.8 19 L6.1 11.8 L0 7.3 L7.6 7.2 Z" fill="#3a3a3a" stroke="#3a3a3a" stroke-width="0"/><path transform="translate(64.35,0) scale(0.975,1.1)" d="M10 0 L12.4 7.2 L20 7.3 L13.9 11.8 L16.2 19 L10 14.6 L3.8 19 L6.1 11.8 L0 7.3 L7.6 7.2 Z" fill="#3a3a3a" stroke="#3a3a3a" stroke-width="0"/><path transform="translate(85.8,0) scale(0.975,1.1)" d="M10 0 L12.4 7.2 L20 7.3 L13.9 11.8 L16.2 19 L10 14.6 L3.8 19 L6.1 11.8 L0 7.3 L7.6 7.2 Z" fill="none" stroke="#3a3a3a" stroke-width="1.3"/></svg>
<div class="cell" style="left:691px;width:530px;top:633.81px;font-size:24.2px;color:#000">Andreas Loizas 2Set</div>
<div class="cell" style="left:1221px;width:132px;top:632.1px;font-size:27px;font-weight:bold;color:#000">$5,000</div>
<div class="cell" style="left:1353px;width:118px;top:632px;font-size:27px;color:#000">1.12</div>
<div class="t" style="right:426.5px;top:634.2px;font-size:24px;color:#000">$600</div>
<div class="pill" style="left:1568.5px;top:628.2px;width:94.5px;height:30.4px;background:#d4edbc;border-radius:15.2px"></div>
<div class="t" style="left:1587px;top:631.6px;font-size:27px;font-weight:bold;color:#11734b">W</div>
<div class="tri" style="left:1635px;top:640px;border-left-width:7.8px;border-right-width:7.8px;border-top-width:8.7px;border-top-color:#11734b"></div>
<div class="cell" style="left:1677px;width:122px;top:631.6px;font-size:27px;font-weight:bold;color:#3d85c6">6.00</div>
<div class="cell" style="left:1799px;width:181px;top:633.4px;font-size:24.5px;color:#333">$5,550</div>
<div class="a" style="left:435px;top:661px;width:786px;height:42px;background:#fff"></div>
<div class="a" style="left:1221px;top:661px;width:132px;height:42px;background:#fdf0cf"></div>
<div class="a" style="left:1353px;top:661px;width:118px;height:42px;background:#b7b7b7"></div>
<div class="a" style="left:1471px;top:661px;width:84px;height:42px;background:#fff"></div>
<div class="a" style="left:1555px;top:661px;width:122px;height:42px;background:#fff"></div>
<div class="a" style="left:1677px;top:661px;width:122px;height:42px;background:#fff"></div>
<div class="a" style="left:1799px;top:661px;width:181px;height:42px;background:#fdf0cf"></div>
<div class="a" style="left:555px;top:702.2px;width:666px;height:1.8px;background:#b6d5a4"></div>
<div class="a" style="left:1471px;top:702.2px;width:84px;height:1.8px;background:#b6d5a4"></div>
<div class="a" style="left:1677px;top:702.2px;width:303px;height:1.8px;background:#b6d5a4"></div>
<div class="a" style="left:1554px;top:701px;width:124px;height:3px;background:#000"></div>
<div class="pill" style="left:18px;top:668px;width:172px;height:29px;background:#e0fbe8;border-radius:14.5px"></div>
<div class="t" style="right:1831.5px;top:669.8px;font-size:24px;font-weight:bold;color:#5a3286">ATP</div>
<div class="tri" style="left:162.5px;top:678.2px;border-left-width:7.1px;border-right-width:7.1px;border-top-width:8px;border-top-color:#5a3286"></div>
<div class="pill" style="left:327px;top:668px;width:63px;height:23.6px;background:#ffe5a0;border-radius:12px"></div>
<div class="t" style="left:338px;top:670.9px;font-size:21.5px;color:#473821">Live</div>
<div class="tri" style="left:405px;top:679px;border-left-width:6.15px;border-right-width:6.15px;border-top-width:7px;border-top-color:#c8c8c8"></div>
<div class="cell" style="left:435px;width:120px;top:669.5px;font-size:22.5px;color:#333">3-Jun</div>
<div class="pill" style="left:558px;top:676px;width:130px;height:25px;background:#e8e9ec;border-radius:13px"></div>
<svg class="ico" style="left:570px;top:677.3px" width="108" height="23" viewBox="-0.5 -0.5 108 23"><path transform="translate(0.0,0) scale(0.975,1.1)" d="M10 0 L12.4 7.2 L20 7.3 L13.9 11.8 L16.2 19 L10 14.6 L3.8 19 L6.1 11.8 L0 7.3 L7.6 7.2 Z" fill="#3a3a3a" stroke="#3a3a3a" stroke-width="0"/><path transform="translate(21.45,0) scale(0.975,1.1)" d="M10 0 L12.4 7.2 L20 7.3 L13.9 11.8 L16.2 19 L10 14.6 L3.8 19 L6.1 11.8 L0 7.3 L7.6 7.2 Z" fill="#3a3a3a" stroke="#3a3a3a" stroke-width="0"/><path transform="translate(42.9,0) scale(0.975,1.1)" d="M10 0 L12.4 7.2 L20 7.3 L13.9 11.8 L16.2 19 L10 14.6 L3.8 19 L6.1 11.8 L0 7.3 L7.6 7.2 Z" fill="#3a3a3a" stroke="#3a3a3a" stroke-width="0"/><path transform="translate(64.35,0) scale(0.975,1.1)" d="M10 0 L12.4 7.2 L20 7.3 L13.9 11.8 L16.2 19 L10 14.6 L3.8 19 L6.1 11.8 L0 7.3 L7.6 7.2 Z" fill="#3a3a3a" stroke="#3a3a3a" stroke-width="0"/><path transform="translate(85.8,0) scale(0.975,1.1)" d="M10 0 L12.4 7.2 L20 7.3 L13.9 11.8 L16.2 19 L10 14.6 L3.8 19 L6.1 11.8 L0 7.3 L7.6 7.2 Z" fill="none" stroke="#3a3a3a" stroke-width="1.3"/></svg>
<div class="cell" style="left:691px;width:530px;top:675.81px;font-size:24.2px;color:#000">Carlos Alcaraz</div>
<div class="cell" style="left:1221px;width:132px;top:674.1px;font-size:27px;font-weight:bold;color:#000">$5,600</div>
<div class="cell" style="left:1353px;width:118px;top:674px;font-size:27px;color:#000">1.07</div>
<div class="t" style="right:426.5px;top:676.2px;font-size:24px;color:#000">$392</div>
<div class="pill" style="left:1568.5px;top:670.2px;width:94.5px;height:30.4px;background:#d4edbc;border-radius:15.2px"></div>
<div class="t" style="left:1587px;top:673.6px;font-size:27px;font-weight:bold;color:#11734b">W</div>
<div class="tri" style="left:1635px;top:682px;border-left-width:7.8px;border-right-width:7.8px;border-top-width:8.7px;border-top-color:#11734b"></div>
<div class="cell" style="left:1677px;width:122px;top:673.6px;font-size:27px;font-weight:bold;color:#3d85c6">3.92</div>
<div class="cell" style="left:1799px;width:181px;top:675.4px;font-size:24.5px;color:#333">$5,942</div>
<div class="a" style="left:435px;top:703px;width:786px;height:42px;background:#fff"></div>
<div class="a" style="left:1221px;top:703px;width:132px;height:42px;background:#fdf0cf"></div>
<div class="a" style="left:1353px;top:703px;width:118px;height:42px;background:#fdf0cf"></div>
<div class="a" style="left:1471px;top:703px;width:84px;height:42px;background:#fff"></div>
<div class="a" style="left:1555px;top:703px;width:122px;height:42px;background:#fff"></div>
<div class="a" style="left:1677px;top:703px;width:122px;height:42px;background:#fff"></div>
<div class="a" style="left:1799px;top:703px;width:181px;height:42px;background:#fdf0cf"></div>
<div class="a" style="left:555px;top:744.2px;width:666px;height:1.8px;background:#b6d5a4"></div>
<div class="a" style="left:1471px;top:744.2px;width:84px;height:1.8px;background:#b6d5a4"></div>
<div class="a" style="left:1677px;top:744.2px;width:303px;height:1.8px;background:#b6d5a4"></div>
<div class="a" style="left:1554px;top:743px;width:124px;height:3px;background:#000"></div>
<div class="pill" style="left:18px;top:710px;width:172px;height:29px;background:#ffc8aa;border-radius:14.5px"></div>
<div class="t" style="right:1831.5px;top:711.8px;font-size:24px;font-weight:bold;color:#000000">basket</div>
<div class="tri" style="left:162.5px;top:720.2px;border-left-width:7.1px;border-right-width:7.1px;border-top-width:8px;border-top-color:#000000"></div>
<div class="pill" style="left:327px;top:710px;width:63px;height:23.6px;background:#ffe5a0;border-radius:12px"></div>
<div class="t" style="left:338px;top:712.9px;font-size:21.5px;color:#473821">Live</div>
<div class="tri" style="left:405px;top:721px;border-left-width:6.15px;border-right-width:6.15px;border-top-width:7px;border-top-color:#c8c8c8"></div>
<div class="cell" style="left:435px;width:120px;top:711.5px;font-size:22.5px;color:#333">3-Jun</div>
<div class="pill" style="left:558px;top:718px;width:130px;height:25px;background:#e8e9ec;border-radius:13px"></div>
<svg class="ico" style="left:570px;top:719.3px" width="108" height="23" viewBox="-0.5 -0.5 108 23"><path transform="translate(0.0,0) scale(0.975,1.1)" d="M10 0 L12.4 7.2 L20 7.3 L13.9 11.8 L16.2 19 L10 14.6 L3.8 19 L6.1 11.8 L0 7.3 L7.6 7.2 Z" fill="#3a3a3a" stroke="#3a3a3a" stroke-width="0"/><path transform="translate(21.45,0) scale(0.975,1.1)" d="M10 0 L12.4 7.2 L20 7.3 L13.9 11.8 L16.2 19 L10 14.6 L3.8 19 L6.1 11.8 L0 7.3 L7.6 7.2 Z" fill="#3a3a3a" stroke="#3a3a3a" stroke-width="0"/><path transform="translate(42.9,0) scale(0.975,1.1)" d="M10 0 L12.4 7.2 L20 7.3 L13.9 11.8 L16.2 19 L10 14.6 L3.8 19 L6.1 11.8 L0 7.3 L7.6 7.2 Z" fill="#3a3a3a" stroke="#3a3a3a" stroke-width="0"/><path transform="translate(64.35,0) scale(0.975,1.1)" d="M10 0 L12.4 7.2 L20 7.3 L13.9 11.8 L16.2 19 L10 14.6 L3.8 19 L6.1 11.8 L0 7.3 L7.6 7.2 Z" fill="#3a3a3a" stroke="#3a3a3a" stroke-width="0"/><path transform="translate(85.8,0) scale(0.975,1.1)" d="M10 0 L12.4 7.2 L20 7.3 L13.9 11.8 L16.2 19 L10 14.6 L3.8 19 L6.1 11.8 L0 7.3 L7.6 7.2 Z" fill="none" stroke="#3a3a3a" stroke-width="1.3"/></svg>
<div class="cell" style="left:691px;width:530px;top:717.81px;font-size:24.2px;color:#000">Barcelona +8.5</div>
<div class="cell" style="left:1221px;width:132px;top:716.1px;font-size:27px;font-weight:bold;color:#000">$145</div>
<div class="cell" style="left:1353px;width:118px;top:716px;font-size:27px;color:#000">1.30</div>
<div class="t" style="right:426.5px;top:718.2px;font-size:24px;color:#000">$44</div>
<div class="pill" style="left:1568.5px;top:712.2px;width:94.5px;height:30.4px;background:#d4edbc;border-radius:15.2px"></div>
<div class="t" style="left:1587px;top:715.6px;font-size:27px;font-weight:bold;color:#11734b">W</div>
<div class="tri" style="left:1635px;top:724px;border-left-width:7.8px;border-right-width:7.8px;border-top-width:8.7px;border-top-color:#11734b"></div>
<div class="cell" style="left:1677px;width:122px;top:715.6px;font-size:27px;font-weight:bold;color:#3d85c6">0.44</div>
<div class="cell" style="left:1799px;width:181px;top:717.4px;font-size:24.5px;color:#333">$5,986</div>
<div class="a" style="left:435px;top:745px;width:786px;height:42px;background:#fff"></div>
<div class="a" style="left:1221px;top:745px;width:132px;height:42px;background:#fdf0cf"></div>
<div class="a" style="left:1353px;top:745px;width:118px;height:42px;background:#d9d9d9"></div>
<div class="a" style="left:1471px;top:745px;width:84px;height:42px;background:#fff"></div>
<div class="a" style="left:1555px;top:745px;width:122px;height:42px;background:#fff"></div>
<div class="a" style="left:1677px;top:745px;width:122px;height:42px;background:#fff"></div>
<div class="a" style="left:1799px;top:745px;width:181px;height:42px;background:#fdf0cf"></div>
<div class="a" style="left:555px;top:786.2px;width:666px;height:1.8px;background:#b6d5a4"></div>
<div class="a" style="left:1471px;top:786.2px;width:84px;height:1.8px;background:#b6d5a4"></div>
<div class="a" style="left:1677px;top:786.2px;width:303px;height:1.8px;background:#b6d5a4"></div>
<div class="a" style="left:1554px;top:785px;width:124px;height:3px;background:#000"></div>
<div class="pill" style="left:18px;top:752px;width:172px;height:29px;background:#e0fbe8;border-radius:14.5px"></div>
<div class="t" style="right:1831.5px;top:753.8px;font-size:24px;font-weight:bold;color:#5a3286">ATP</div>
<div class="tri" style="left:162.5px;top:762.2px;border-left-width:7.1px;border-right-width:7.1px;border-top-width:8px;border-top-color:#5a3286"></div>
<div class="pill" style="left:327px;top:752px;width:63px;height:23.6px;background:#ffe5a0;border-radius:12px"></div>
<div class="t" style="left:338px;top:754.9px;font-size:21.5px;color:#473821">Live</div>
<div class="tri" style="left:405px;top:763px;border-left-width:6.15px;border-right-width:6.15px;border-top-width:7px;border-top-color:#c8c8c8"></div>
<div class="cell" style="left:435px;width:120px;top:753.5px;font-size:22.5px;color:#333">3-Jun</div>
<div class="pill" style="left:558px;top:760px;width:130px;height:25px;background:#e8e9ec;border-radius:13px"></div>
<svg class="ico" style="left:570px;top:761.3px" width="108" height="23" viewBox="-0.5 -0.5 108 23"><path transform="translate(0.0,0) scale(0.975,1.1)" d="M10 0 L12.4 7.2 L20 7.3 L13.9 11.8 L16.2 19 L10 14.6 L3.8 19 L6.1 11.8 L0 7.3 L7.6 7.2 Z" fill="#3a3a3a" stroke="#3a3a3a" stroke-width="0"/><path transform="translate(21.45,0) scale(0.975,1.1)" d="M10 0 L12.4 7.2 L20 7.3 L13.9 11.8 L16.2 19 L10 14.6 L3.8 19 L6.1 11.8 L0 7.3 L7.6 7.2 Z" fill="#3a3a3a" stroke="#3a3a3a" stroke-width="0"/><path transform="translate(42.9,0) scale(0.975,1.1)" d="M10 0 L12.4 7.2 L20 7.3 L13.9 11.8 L16.2 19 L10 14.6 L3.8 19 L6.1 11.8 L0 7.3 L7.6 7.2 Z" fill="#3a3a3a" stroke="#3a3a3a" stroke-width="0"/><path transform="translate(64.35,0) scale(0.975,1.1)" d="M10 0 L12.4 7.2 L20 7.3 L13.9 11.8 L16.2 19 L10 14.6 L3.8 19 L6.1 11.8 L0 7.3 L7.6 7.2 Z" fill="#3a3a3a" stroke="#3a3a3a" stroke-width="0"/><path transform="translate(85.8,0) scale(0.975,1.1)" d="M10 0 L12.4 7.2 L20 7.3 L13.9 11.8 L16.2 19 L10 14.6 L3.8 19 L6.1 11.8 L0 7.3 L7.6 7.2 Z" fill="none" stroke="#3a3a3a" stroke-width="1.3"/></svg>
<div class="cell" style="left:691px;width:530px;top:759.81px;font-size:24.2px;color:#000">Lorenzo Brunkow 1S</div>
<div class="cell" style="left:1221px;width:132px;top:758.1px;font-size:27px;font-weight:bold;color:#000">$5,986</div>
<div class="cell" style="left:1353px;width:118px;top:758px;font-size:27px;color:#000">1.11</div>
<div class="t" style="right:426.5px;top:760.2px;font-size:24px;color:#000">$664</div>
<div class="pill" style="left:1568.5px;top:754.2px;width:94.5px;height:30.4px;background:#d4edbc;border-radius:15.2px"></div>
<div class="t" style="left:1587px;top:757.6px;font-size:27px;font-weight:bold;color:#11734b">W</div>
<div class="tri" style="left:1635px;top:766px;border-left-width:7.8px;border-right-width:7.8px;border-top-width:8.7px;border-top-color:#11734b"></div>
<div class="cell" style="left:1677px;width:122px;top:757.6px;font-size:27px;font-weight:bold;color:#3d85c6">6.64</div>
<div class="cell" style="left:1799px;width:181px;top:759.4px;font-size:24.5px;color:#333">$6,650</div>
<div class="a" style="left:435px;top:787px;width:786px;height:42px;background:#fff"></div>
<div class="a" style="left:1221px;top:787px;width:132px;height:42px;background:#fdf0cf"></div>
<div class="a" style="left:1353px;top:787px;width:118px;height:42px;background:#fdf0cf"></div>
<div class="a" style="left:1471px;top:787px;width:84px;height:42px;background:#fff"></div>
<div class="a" style="left:1555px;top:787px;width:122px;height:42px;background:#fff"></div>
<div class="a" style="left:1677px;top:787px;width:122px;height:42px;background:#fff"></div>
<div class="a" style="left:1799px;top:787px;width:181px;height:42px;background:#fdf0cf"></div>
<div class="a" style="left:555px;top:828.2px;width:666px;height:1.8px;background:#b6d5a4"></div>
<div class="a" style="left:1471px;top:828.2px;width:84px;height:1.8px;background:#b6d5a4"></div>
<div class="a" style="left:1677px;top:828.2px;width:303px;height:1.8px;background:#b6d5a4"></div>
<div class="a" style="left:1554px;top:827px;width:124px;height:3px;background:#000"></div>
<div class="pill" style="left:18px;top:794px;width:172px;height:29px;background:#473821;border-radius:14.5px"></div>
<div class="t" style="right:1831.5px;top:795.8px;font-size:24px;font-weight:bold;color:#ffe5a0">MLB</div>
<div class="tri" style="left:162.5px;top:804.2px;border-left-width:7.1px;border-right-width:7.1px;border-top-width:8px;border-top-color:#ffe5a0"></div>
<div class="pill" style="left:327px;top:794px;width:63px;height:23.6px;background:#ffe5a0;border-radius:12px"></div>
<div class="t" style="left:338px;top:796.9px;font-size:21.5px;color:#473821">Live</div>
<div class="tri" style="left:405px;top:805px;border-left-width:6.15px;border-right-width:6.15px;border-top-width:7px;border-top-color:#c8c8c8"></div>
<div class="cell" style="left:435px;width:120px;top:795.5px;font-size:22.5px;color:#333">3-Jun</div>
<div class="pill" style="left:558px;top:802px;width:130px;height:25px;background:#e8e9ec;border-radius:13px"></div>
<svg class="ico" style="left:570px;top:803.3px" width="108" height="23" viewBox="-0.5 -0.5 108 23"><path transform="translate(0.0,0) scale(0.975,1.1)" d="M10 0 L12.4 7.2 L20 7.3 L13.9 11.8 L16.2 19 L10 14.6 L3.8 19 L6.1 11.8 L0 7.3 L7.6 7.2 Z" fill="#3a3a3a" stroke="#3a3a3a" stroke-width="0"/><path transform="translate(21.45,0) scale(0.975,1.1)" d="M10 0 L12.4 7.2 L20 7.3 L13.9 11.8 L16.2 19 L10 14.6 L3.8 19 L6.1 11.8 L0 7.3 L7.6 7.2 Z" fill="#3a3a3a" stroke="#3a3a3a" stroke-width="0"/><path transform="translate(42.9,0) scale(0.975,1.1)" d="M10 0 L12.4 7.2 L20 7.3 L13.9 11.8 L16.2 19 L10 14.6 L3.8 19 L6.1 11.8 L0 7.3 L7.6 7.2 Z" fill="#3a3a3a" stroke="#3a3a3a" stroke-width="0"/><path transform="translate(64.35,0) scale(0.975,1.1)" d="M10 0 L12.4 7.2 L20 7.3 L13.9 11.8 L16.2 19 L10 14.6 L3.8 19 L6.1 11.8 L0 7.3 L7.6 7.2 Z" fill="#3a3a3a" stroke="#3a3a3a" stroke-width="0"/><path transform="translate(85.8,0) scale(0.975,1.1)" d="M10 0 L12.4 7.2 L20 7.3 L13.9 11.8 L16.2 19 L10 14.6 L3.8 19 L6.1 11.8 L0 7.3 L7.6 7.2 Z" fill="none" stroke="#3a3a3a" stroke-width="1.3"/></svg>
<div class="cell" style="left:691px;width:530px;top:801.81px;font-size:24.2px;color:#000">BAL Orioles +1.5</div>
<div class="cell" style="left:1221px;width:132px;top:800.1px;font-size:27px;font-weight:bold;color:#000">$99</div>
<div class="cell" style="left:1353px;width:118px;top:800px;font-size:27px;color:#000">1.58</div>
<div class="t" style="right:426.5px;top:802.2px;font-size:24px;color:#000">$57</div>
<div class="pill" style="left:1568.5px;top:796.2px;width:94.5px;height:30.4px;background:#d4edbc;border-radius:15.2px"></div>
<div class="t" style="left:1587px;top:799.6px;font-size:27px;font-weight:bold;color:#11734b">W</div>
<div class="tri" style="left:1635px;top:808px;border-left-width:7.8px;border-right-width:7.8px;border-top-width:8.7px;border-top-color:#11734b"></div>
<div class="cell" style="left:1677px;width:122px;top:799.6px;font-size:27px;font-weight:bold;color:#3d85c6">0.57</div>
<div class="cell" style="left:1799px;width:181px;top:801.4px;font-size:24.5px;color:#333">$6,707</div>
<div class="a" style="left:435px;top:829px;width:786px;height:42px;background:#fff"></div>
<div class="a" style="left:1221px;top:829px;width:132px;height:42px;background:#fdf0cf"></div>
<div class="a" style="left:1353px;top:829px;width:118px;height:42px;background:#f9cb9c"></div>
<div class="a" style="left:1471px;top:829px;width:84px;height:42px;background:#fff"></div>
<div class="a" style="left:1555px;top:829px;width:122px;height:42px;background:#fff"></div>
<div class="a" style="left:1677px;top:829px;width:122px;height:42px;background:#fdf0cf"></div>
<div class="a" style="left:1799px;top:829px;width:181px;height:42px;background:#fdf0cf"></div>
<div class="a" style="left:555px;top:870.2px;width:666px;height:1.8px;background:#b6d5a4"></div>
<div class="a" style="left:1471px;top:870.2px;width:84px;height:1.8px;background:#b6d5a4"></div>
<div class="a" style="left:1677px;top:870.2px;width:303px;height:1.8px;background:#b6d5a4"></div>
<div class="a" style="left:1554px;top:869px;width:124px;height:3px;background:#000"></div>
<div class="pill" style="left:18px;top:836px;width:172px;height:29px;background:#473821;border-radius:14.5px"></div>
<div class="t" style="right:1831.5px;top:837.8px;font-size:24px;font-weight:bold;color:#ffe5a0">MLB</div>
<div class="tri" style="left:162.5px;top:846.2px;border-left-width:7.1px;border-right-width:7.1px;border-top-width:8px;border-top-color:#ffe5a0"></div>
<div class="pill" style="left:327px;top:836px;width:63px;height:23.6px;background:#ffe5a0;border-radius:12px"></div>
<div class="t" style="left:338px;top:838.9px;font-size:21.5px;color:#473821">Live</div>
<div class="tri" style="left:405px;top:847px;border-left-width:6.15px;border-right-width:6.15px;border-top-width:7px;border-top-color:#c8c8c8"></div>
<div class="cell" style="left:435px;width:120px;top:837.5px;font-size:22.5px;color:#333">3-Jun</div>
<div class="pill" style="left:558px;top:844px;width:130px;height:25px;background:#e8e9ec;border-radius:13px"></div>
<svg class="ico" style="left:570px;top:845.3px" width="108" height="23" viewBox="-0.5 -0.5 108 23"><path transform="translate(0.0,0) scale(0.975,1.1)" d="M10 0 L12.4 7.2 L20 7.3 L13.9 11.8 L16.2 19 L10 14.6 L3.8 19 L6.1 11.8 L0 7.3 L7.6 7.2 Z" fill="#3a3a3a" stroke="#3a3a3a" stroke-width="0"/><path transform="translate(21.45,0) scale(0.975,1.1)" d="M10 0 L12.4 7.2 L20 7.3 L13.9 11.8 L16.2 19 L10 14.6 L3.8 19 L6.1 11.8 L0 7.3 L7.6 7.2 Z" fill="#3a3a3a" stroke="#3a3a3a" stroke-width="0"/><path transform="translate(42.9,0) scale(0.975,1.1)" d="M10 0 L12.4 7.2 L20 7.3 L13.9 11.8 L16.2 19 L10 14.6 L3.8 19 L6.1 11.8 L0 7.3 L7.6 7.2 Z" fill="#3a3a3a" stroke="#3a3a3a" stroke-width="0"/><path transform="translate(64.35,0) scale(0.975,1.1)" d="M10 0 L12.4 7.2 L20 7.3 L13.9 11.8 L16.2 19 L10 14.6 L3.8 19 L6.1 11.8 L0 7.3 L7.6 7.2 Z" fill="#3a3a3a" stroke="#3a3a3a" stroke-width="0"/><path transform="translate(85.8,0) scale(0.975,1.1)" d="M10 0 L12.4 7.2 L20 7.3 L13.9 11.8 L16.2 19 L10 14.6 L3.8 19 L6.1 11.8 L0 7.3 L7.6 7.2 Z" fill="none" stroke="#3a3a3a" stroke-width="1.3"/></svg>
<div class="cell" style="left:691px;width:530px;top:843.81px;font-size:24.2px;color:#000">PHI + PIT</div>
<div class="cell" style="left:1221px;width:132px;top:842.1px;font-size:27px;font-weight:bold;color:#000">$99</div>
<div class="cell" style="left:1353px;width:118px;top:842px;font-size:27px;color:#000">2.79</div>
<div class="t" style="right:426.5px;top:844.2px;font-size:24px;color:#e0332b">-$99</div>
<div class="pill" style="left:1568.5px;top:838.2px;width:94.5px;height:30.4px;background:#ffcfc9;border-radius:15.2px"></div>
<div class="t" style="left:1592px;top:841.6px;font-size:27px;font-weight:bold;color:#b10202">L</div>
<div class="tri" style="left:1635px;top:850px;border-left-width:7.8px;border-right-width:7.8px;border-top-width:8.7px;border-top-color:#b10202"></div>
<div class="cell" style="left:1677px;width:122px;top:841.6px;font-size:27px;font-weight:bold;color:#e8251a">-0.99</div>
<div class="cell" style="left:1799px;width:181px;top:843.4px;font-size:24.5px;color:#333">$6,608</div>
<div class="a" style="left:435px;top:871px;width:786px;height:42px;background:#fff"></div>
<div class="a" style="left:1221px;top:871px;width:132px;height:42px;background:#fdf0cf"></div>
<div class="a" style="left:1353px;top:871px;width:118px;height:42px;background:#f9cb9c"></div>
<div class="a" style="left:1471px;top:871px;width:84px;height:42px;background:#fff"></div>
<div class="a" style="left:1555px;top:871px;width:122px;height:42px;background:#fff"></div>
<div class="a" style="left:1677px;top:871px;width:122px;height:42px;background:#fdf0cf"></div>
<div class="a" style="left:1799px;top:871px;width:181px;height:42px;background:#fdf0cf"></div>
<div class="a" style="left:555px;top:912.2px;width:666px;height:1.8px;background:#b6d5a4"></div>
<div class="a" style="left:1471px;top:912.2px;width:84px;height:1.8px;background:#b6d5a4"></div>
<div class="a" style="left:1677px;top:912.2px;width:303px;height:1.8px;background:#b6d5a4"></div>
<div class="a" style="left:1554px;top:911px;width:124px;height:3px;background:#000"></div>
<div class="pill" style="left:18px;top:878px;width:172px;height:29px;background:#473821;border-radius:14.5px"></div>
<div class="t" style="right:1831.5px;top:879.8px;font-size:24px;font-weight:bold;color:#ffe5a0">MLB</div>
<div class="tri" style="left:162.5px;top:888.2px;border-left-width:7.1px;border-right-width:7.1px;border-top-width:8px;border-top-color:#ffe5a0"></div>
<div class="pill" style="left:327px;top:878px;width:63px;height:23.6px;background:#ffe5a0;border-radius:12px"></div>
<div class="t" style="left:338px;top:880.9px;font-size:21.5px;color:#473821">Live</div>
<div class="tri" style="left:405px;top:889px;border-left-width:6.15px;border-right-width:6.15px;border-top-width:7px;border-top-color:#c8c8c8"></div>
<div class="cell" style="left:435px;width:120px;top:879.5px;font-size:22.5px;color:#333">3-Jun</div>
<div class="pill" style="left:558px;top:886px;width:130px;height:25px;background:#e8e9ec;border-radius:13px"></div>
<svg class="ico" style="left:570px;top:887.3px" width="108" height="23" viewBox="-0.5 -0.5 108 23"><path transform="translate(0.0,0) scale(0.975,1.1)" d="M10 0 L12.4 7.2 L20 7.3 L13.9 11.8 L16.2 19 L10 14.6 L3.8 19 L6.1 11.8 L0 7.3 L7.6 7.2 Z" fill="#3a3a3a" stroke="#3a3a3a" stroke-width="0"/><path transform="translate(21.45,0) scale(0.975,1.1)" d="M10 0 L12.4 7.2 L20 7.3 L13.9 11.8 L16.2 19 L10 14.6 L3.8 19 L6.1 11.8 L0 7.3 L7.6 7.2 Z" fill="#3a3a3a" stroke="#3a3a3a" stroke-width="0"/><path transform="translate(42.9,0) scale(0.975,1.1)" d="M10 0 L12.4 7.2 L20 7.3 L13.9 11.8 L16.2 19 L10 14.6 L3.8 19 L6.1 11.8 L0 7.3 L7.6 7.2 Z" fill="#3a3a3a" stroke="#3a3a3a" stroke-width="0"/><path transform="translate(64.35,0) scale(0.975,1.1)" d="M10 0 L12.4 7.2 L20 7.3 L13.9 11.8 L16.2 19 L10 14.6 L3.8 19 L6.1 11.8 L0 7.3 L7.6 7.2 Z" fill="#3a3a3a" stroke="#3a3a3a" stroke-width="0"/><path transform="translate(85.8,0) scale(0.975,1.1)" d="M10 0 L12.4 7.2 L20 7.3 L13.9 11.8 L16.2 19 L10 14.6 L3.8 19 L6.1 11.8 L0 7.3 L7.6 7.2 Z" fill="none" stroke="#3a3a3a" stroke-width="1.3"/></svg>
<div class="cell" style="left:691px;width:530px;top:885.81px;font-size:24.2px;color:#000">DET + MIN</div>
<div class="cell" style="left:1221px;width:132px;top:884.1px;font-size:27px;font-weight:bold;color:#000">$99</div>
<div class="cell" style="left:1353px;width:118px;top:884px;font-size:27px;color:#000">2.44</div>
<div class="t" style="right:426.5px;top:886.2px;font-size:24px;color:#e0332b">-$99</div>
<div class="pill" style="left:1568.5px;top:880.2px;width:94.5px;height:30.4px;background:#ffcfc9;border-radius:15.2px"></div>
<div class="t" style="left:1592px;top:883.6px;font-size:27px;font-weight:bold;color:#b10202">L</div>
<div class="tri" style="left:1635px;top:892px;border-left-width:7.8px;border-right-width:7.8px;border-top-width:8.7px;border-top-color:#b10202"></div>
<div class="cell" style="left:1677px;width:122px;top:883.6px;font-size:27px;font-weight:bold;color:#e8251a">-0.99</div>
<div class="cell" style="left:1799px;width:181px;top:885.4px;font-size:24.5px;color:#333">$6,509</div>
<div class="a" style="left:435px;top:913px;width:786px;height:42px;background:#fff"></div>
<div class="a" style="left:1221px;top:913px;width:132px;height:42px;background:#fdf0cf"></div>
<div class="a" style="left:1353px;top:913px;width:118px;height:42px;background:#f9cb9c"></div>
<div class="a" style="left:1471px;top:913px;width:84px;height:42px;background:#fff"></div>
<div class="a" style="left:1555px;top:913px;width:122px;height:42px;background:#fff"></div>
<div class="a" style="left:1677px;top:913px;width:122px;height:42px;background:#fff"></div>
<div class="a" style="left:1799px;top:913px;width:181px;height:42px;background:#fdf0cf"></div>
<div class="a" style="left:555px;top:954.2px;width:666px;height:1.8px;background:#b6d5a4"></div>
<div class="a" style="left:1471px;top:954.2px;width:84px;height:1.8px;background:#b6d5a4"></div>
<div class="a" style="left:1677px;top:954.2px;width:303px;height:1.8px;background:#b6d5a4"></div>
<div class="a" style="left:1554px;top:953px;width:124px;height:3px;background:#000"></div>
<div class="pill" style="left:18px;top:920px;width:172px;height:29px;background:#473821;border-radius:14.5px"></div>
<div class="t" style="right:1831.5px;top:921.8px;font-size:24px;font-weight:bold;color:#ffe5a0">MLB</div>
<div class="tri" style="left:162.5px;top:930.2px;border-left-width:7.1px;border-right-width:7.1px;border-top-width:8px;border-top-color:#ffe5a0"></div>
<div class="pill" style="left:327px;top:920px;width:63px;height:23.6px;background:#ffe5a0;border-radius:12px"></div>
<div class="t" style="left:338px;top:922.9px;font-size:21.5px;color:#473821">Live</div>
<div class="tri" style="left:405px;top:931px;border-left-width:6.15px;border-right-width:6.15px;border-top-width:7px;border-top-color:#c8c8c8"></div>
<div class="cell" style="left:435px;width:120px;top:921.5px;font-size:22.5px;color:#333">3-Jun</div>
<div class="pill" style="left:558px;top:928px;width:130px;height:25px;background:#e8e9ec;border-radius:13px"></div>
<svg class="ico" style="left:570px;top:929.3px" width="108" height="23" viewBox="-0.5 -0.5 108 23"><path transform="translate(0.0,0) scale(0.975,1.1)" d="M10 0 L12.4 7.2 L20 7.3 L13.9 11.8 L16.2 19 L10 14.6 L3.8 19 L6.1 11.8 L0 7.3 L7.6 7.2 Z" fill="#3a3a3a" stroke="#3a3a3a" stroke-width="0"/><path transform="translate(21.45,0) scale(0.975,1.1)" d="M10 0 L12.4 7.2 L20 7.3 L13.9 11.8 L16.2 19 L10 14.6 L3.8 19 L6.1 11.8 L0 7.3 L7.6 7.2 Z" fill="#3a3a3a" stroke="#3a3a3a" stroke-width="0"/><path transform="translate(42.9,0) scale(0.975,1.1)" d="M10 0 L12.4 7.2 L20 7.3 L13.9 11.8 L16.2 19 L10 14.6 L3.8 19 L6.1 11.8 L0 7.3 L7.6 7.2 Z" fill="#3a3a3a" stroke="#3a3a3a" stroke-width="0"/><path transform="translate(64.35,0) scale(0.975,1.1)" d="M10 0 L12.4 7.2 L20 7.3 L13.9 11.8 L16.2 19 L10 14.6 L3.8 19 L6.1 11.8 L0 7.3 L7.6 7.2 Z" fill="#3a3a3a" stroke="#3a3a3a" stroke-width="0"/><path transform="translate(85.8,0) scale(0.975,1.1)" d="M10 0 L12.4 7.2 L20 7.3 L13.9 11.8 L16.2 19 L10 14.6 L3.8 19 L6.1 11.8 L0 7.3 L7.6 7.2 Z" fill="none" stroke="#3a3a3a" stroke-width="1.3"/></svg>
<div class="cell" style="left:691px;width:530px;top:927.81px;font-size:24.2px;color:#000">LAD+MIN+BAL</div>
<div class="cell" style="left:1221px;width:132px;top:926.1px;font-size:27px;font-weight:bold;color:#000">$100</div>
<div class="cell" style="left:1353px;width:118px;top:926px;font-size:27px;color:#000">2.92</div>
<div class="t" style="right:426.5px;top:928.2px;font-size:24px;color:#000">$192</div>
<div class="pill" style="left:1568.5px;top:922.2px;width:94.5px;height:30.4px;background:#d4edbc;border-radius:15.2px"></div>
<div class="t" style="left:1587px;top:925.6px;font-size:27px;font-weight:bold;color:#11734b">W</div>
<div class="tri" style="left:1635px;top:934px;border-left-width:7.8px;border-right-width:7.8px;border-top-width:8.7px;border-top-color:#11734b"></div>
<div class="cell" style="left:1677px;width:122px;top:925.6px;font-size:27px;font-weight:bold;color:#3d85c6">1.92</div>
<div class="cell" style="left:1799px;width:181px;top:927.4px;font-size:24.5px;color:#333">$6,701</div>
<div class="a" style="left:435px;top:955px;width:786px;height:42px;background:#fff"></div>
<div class="a" style="left:1221px;top:955px;width:132px;height:42px;background:#fdf0cf"></div>
<div class="a" style="left:1353px;top:955px;width:118px;height:42px;background:#f9cb9c"></div>
<div class="a" style="left:1471px;top:955px;width:84px;height:42px;background:#fff"></div>
<div class="a" style="left:1555px;top:955px;width:122px;height:42px;background:#fff"></div>
<div class="a" style="left:1677px;top:955px;width:122px;height:42px;background:#fdf0cf"></div>
<div class="a" style="left:1799px;top:955px;width:181px;height:42px;background:#fdf0cf"></div>
<div class="a" style="left:555px;top:996.2px;width:666px;height:1.8px;background:#b6d5a4"></div>
<div class="a" style="left:1471px;top:996.2px;width:84px;height:1.8px;background:#b6d5a4"></div>
<div class="a" style="left:1677px;top:996.2px;width:303px;height:1.8px;background:#b6d5a4"></div>
<div class="a" style="left:1554px;top:995px;width:124px;height:3px;background:#000"></div>
<div class="pill" style="left:18px;top:962px;width:172px;height:29px;background:#473821;border-radius:14.5px"></div>
<div class="t" style="right:1831.5px;top:963.8px;font-size:24px;font-weight:bold;color:#ffe5a0">MLB</div>
<div class="tri" style="left:162.5px;top:972.2px;border-left-width:7.1px;border-right-width:7.1px;border-top-width:8px;border-top-color:#ffe5a0"></div>
<div class="pill" style="left:327px;top:962px;width:63px;height:23.6px;background:#ffe5a0;border-radius:12px"></div>
<div class="t" style="left:338px;top:964.9px;font-size:21.5px;color:#473821">Live</div>
<div class="tri" style="left:405px;top:973px;border-left-width:6.15px;border-right-width:6.15px;border-top-width:7px;border-top-color:#c8c8c8"></div>
<div class="cell" style="left:435px;width:120px;top:963.5px;font-size:22.5px;color:#333">3-Jun</div>
<div class="pill" style="left:558px;top:970px;width:130px;height:25px;background:#e8e9ec;border-radius:13px"></div>
<svg class="ico" style="left:570px;top:971.3px" width="108" height="23" viewBox="-0.5 -0.5 108 23"><path transform="translate(0.0,0) scale(0.975,1.1)" d="M10 0 L12.4 7.2 L20 7.3 L13.9 11.8 L16.2 19 L10 14.6 L3.8 19 L6.1 11.8 L0 7.3 L7.6 7.2 Z" fill="#3a3a3a" stroke="#3a3a3a" stroke-width="0"/><path transform="translate(21.45,0) scale(0.975,1.1)" d="M10 0 L12.4 7.2 L20 7.3 L13.9 11.8 L16.2 19 L10 14.6 L3.8 19 L6.1 11.8 L0 7.3 L7.6 7.2 Z" fill="#3a3a3a" stroke="#3a3a3a" stroke-width="0"/><path transform="translate(42.9,0) scale(0.975,1.1)" d="M10 0 L12.4 7.2 L20 7.3 L13.9 11.8 L16.2 19 L10 14.6 L3.8 19 L6.1 11.8 L0 7.3 L7.6 7.2 Z" fill="#3a3a3a" stroke="#3a3a3a" stroke-width="0"/><path transform="translate(64.35,0) scale(0.975,1.1)" d="M10 0 L12.4 7.2 L20 7.3 L13.9 11.8 L16.2 19 L10 14.6 L3.8 19 L6.1 11.8 L0 7.3 L7.6 7.2 Z" fill="#3a3a3a" stroke="#3a3a3a" stroke-width="0"/><path transform="translate(85.8,0) scale(0.975,1.1)" d="M10 0 L12.4 7.2 L20 7.3 L13.9 11.8 L16.2 19 L10 14.6 L3.8 19 L6.1 11.8 L0 7.3 L7.6 7.2 Z" fill="none" stroke="#3a3a3a" stroke-width="1.3"/></svg>
<div class="cell" style="left:691px;width:530px;top:969.81px;font-size:24.2px;color:#000">PIT+MIN+CIN</div>
<div class="cell" style="left:1221px;width:132px;top:968.1px;font-size:27px;font-weight:bold;color:#000">$100</div>
<div class="cell" style="left:1353px;width:118px;top:968px;font-size:27px;color:#000">4.38</div>
<div class="t" style="right:426.5px;top:970.2px;font-size:24px;color:#e0332b">-$100</div>
<div class="pill" style="left:1568.5px;top:964.2px;width:94.5px;height:30.4px;background:#ffcfc9;border-radius:15.2px"></div>
<div class="t" style="left:1592px;top:967.6px;font-size:27px;font-weight:bold;color:#b10202">L</div>
<div class="tri" style="left:1635px;top:976px;border-left-width:7.8px;border-right-width:7.8px;border-top-width:8.7px;border-top-color:#b10202"></div>
<div class="cell" style="left:1677px;width:122px;top:967.6px;font-size:27px;font-weight:bold;color:#e8251a">-1.00</div>
<div class="cell" style="left:1799px;width:181px;top:969.4px;font-size:24.5px;color:#333">$6,601</div>
<div class="a" style="left:435px;top:997px;width:786px;height:42px;background:#fff"></div>
<div class="a" style="left:1221px;top:997px;width:132px;height:42px;background:#fdf0cf"></div>
<div class="a" style="left:1353px;top:997px;width:118px;height:42px;background:#b7b7b7"></div>
<div class="a" style="left:1471px;top:997px;width:84px;height:42px;background:#fff"></div>
<div class="a" style="left:1555px;top:997px;width:122px;height:42px;background:#fff"></div>
<div class="a" style="left:1677px;top:997px;width:122px;height:42px;background:#fff"></div>
<div class="a" style="left:1799px;top:997px;width:181px;height:42px;background:#fdf0cf"></div>
<div class="a" style="left:555px;top:1038.2px;width:666px;height:1.8px;background:#b6d5a4"></div>
<div class="a" style="left:1471px;top:1038.2px;width:84px;height:1.8px;background:#b6d5a4"></div>
<div class="a" style="left:1677px;top:1038.2px;width:303px;height:1.8px;background:#b6d5a4"></div>
<div class="a" style="left:1554px;top:1037px;width:124px;height:3px;background:#000"></div>
<div class="pill" style="left:18px;top:1004px;width:172px;height:29px;background:#e0fbe8;border-radius:14.5px"></div>
<div class="t" style="right:1831.5px;top:1005.8px;font-size:24px;font-weight:bold;color:#5a3286">ATP</div>
<div class="tri" style="left:162.5px;top:1014.2px;border-left-width:7.1px;border-right-width:7.1px;border-top-width:8px;border-top-color:#5a3286"></div>
<div class="pill" style="left:327px;top:1004px;width:63px;height:23.6px;background:#ffe5a0;border-radius:12px"></div>
<div class="t" style="left:338px;top:1006.9px;font-size:21.5px;color:#473821">Live</div>
<div class="tri" style="left:405px;top:1015px;border-left-width:6.15px;border-right-width:6.15px;border-top-width:7px;border-top-color:#c8c8c8"></div>
<div class="cell" style="left:435px;width:120px;top:1005.5px;font-size:22.5px;color:#333">3-Jun</div>
<div class="pill" style="left:558px;top:1012px;width:130px;height:25px;background:#e8e9ec;border-radius:13px"></div>
<svg class="ico" style="left:570px;top:1013.3px" width="108" height="23" viewBox="-0.5 -0.5 108 23"><path transform="translate(0.0,0) scale(0.975,1.1)" d="M10 0 L12.4 7.2 L20 7.3 L13.9 11.8 L16.2 19 L10 14.6 L3.8 19 L6.1 11.8 L0 7.3 L7.6 7.2 Z" fill="#3a3a3a" stroke="#3a3a3a" stroke-width="0"/><path transform="translate(21.45,0) scale(0.975,1.1)" d="M10 0 L12.4 7.2 L20 7.3 L13.9 11.8 L16.2 19 L10 14.6 L3.8 19 L6.1 11.8 L0 7.3 L7.6 7.2 Z" fill="#3a3a3a" stroke="#3a3a3a" stroke-width="0"/><path transform="translate(42.9,0) scale(0.975,1.1)" d="M10 0 L12.4 7.2 L20 7.3 L13.9 11.8 L16.2 19 L10 14.6 L3.8 19 L6.1 11.8 L0 7.3 L7.6 7.2 Z" fill="#3a3a3a" stroke="#3a3a3a" stroke-width="0"/><path transform="translate(64.35,0) scale(0.975,1.1)" d="M10 0 L12.4 7.2 L20 7.3 L13.9 11.8 L16.2 19 L10 14.6 L3.8 19 L6.1 11.8 L0 7.3 L7.6 7.2 Z" fill="#3a3a3a" stroke="#3a3a3a" stroke-width="0"/><path transform="translate(85.8,0) scale(0.975,1.1)" d="M10 0 L12.4 7.2 L20 7.3 L13.9 11.8 L16.2 19 L10 14.6 L3.8 19 L6.1 11.8 L0 7.3 L7.6 7.2 Z" fill="none" stroke="#3a3a3a" stroke-width="1.3"/></svg>
<div class="cell" style="left:691px;width:530px;top:1011.81px;font-size:24.2px;color:#000">Nico Mejia 2S</div>
<div class="cell" style="left:1221px;width:132px;top:1010.1px;font-size:27px;font-weight:bold;color:#000">$6,154</div>
<div class="cell" style="left:1353px;width:118px;top:1010px;font-size:27px;color:#000">1.08</div>
<div class="t" style="right:426.5px;top:1012.2px;font-size:24px;color:#000">$511</div>
<div class="pill" style="left:1568.5px;top:1006.2px;width:94.5px;height:30.4px;background:#d4edbc;border-radius:15.2px"></div>
<div class="t" style="left:1587px;top:1009.6px;font-size:27px;font-weight:bold;color:#11734b">W</div>
<div class="tri" style="left:1635px;top:1018px;border-left-width:7.8px;border-right-width:7.8px;border-top-width:8.7px;border-top-color:#11734b"></div>
<div class="cell" style="left:1677px;width:122px;top:1009.6px;font-size:27px;font-weight:bold;color:#3d85c6">5.11</div>
<div class="cell" style="left:1799px;width:181px;top:1011.4px;font-size:24.5px;color:#333">$7,112</div>
<div class="a" style="left:435px;top:1039px;width:786px;height:42px;background:#fff"></div>
<div class="a" style="left:1221px;top:1039px;width:132px;height:42px;background:#fdf0cf"></div>
<div class="a" style="left:1353px;top:1039px;width:118px;height:42px;background:#fdf0cf"></div>
<div class="a" style="left:1471px;top:1039px;width:84px;height:42px;background:#fff"></div>
<div class="a" style="left:1555px;top:1039px;width:122px;height:42px;background:#fff"></div>
<div class="a" style="left:1677px;top:1039px;width:122px;height:42px;background:#fff"></div>
<div class="a" style="left:1799px;top:1039px;width:181px;height:42px;background:#fdf0cf"></div>
<div class="a" style="left:555px;top:1080.2px;width:666px;height:1.8px;background:#b6d5a4"></div>
<div class="a" style="left:1471px;top:1080.2px;width:84px;height:1.8px;background:#b6d5a4"></div>
<div class="a" style="left:1677px;top:1080.2px;width:303px;height:1.8px;background:#b6d5a4"></div>
<div class="a" style="left:1554px;top:1079px;width:124px;height:3px;background:#000"></div>
<div class="pill" style="left:18px;top:1046px;width:172px;height:29px;background:#fbdcf8;border-radius:14.5px"></div>
<div class="t" style="right:1831.5px;top:1047.8px;font-size:24px;font-weight:bold;color:#b10202">WTA</div>
<div class="tri" style="left:162.5px;top:1056.2px;border-left-width:7.1px;border-right-width:7.1px;border-top-width:8px;border-top-color:#b10202"></div>
<div class="pill" style="left:327px;top:1046px;width:63px;height:23.6px;background:#ffe5a0;border-radius:12px"></div>
<div class="t" style="left:338px;top:1048.9px;font-size:21.5px;color:#473821">Live</div>
<div class="tri" style="left:405px;top:1057px;border-left-width:6.15px;border-right-width:6.15px;border-top-width:7px;border-top-color:#c8c8c8"></div>
<div class="cell" style="left:435px;width:120px;top:1047.5px;font-size:22.5px;color:#333">3-Jun</div>
<div class="pill" style="left:558px;top:1054px;width:130px;height:25px;background:#e8e9ec;border-radius:13px"></div>
<svg class="ico" style="left:570px;top:1055.3px" width="108" height="23" viewBox="-0.5 -0.5 108 23"><path transform="translate(0.0,0) scale(0.975,1.1)" d="M10 0 L12.4 7.2 L20 7.3 L13.9 11.8 L16.2 19 L10 14.6 L3.8 19 L6.1 11.8 L0 7.3 L7.6 7.2 Z" fill="#3a3a3a" stroke="#3a3a3a" stroke-width="0"/><path transform="translate(21.45,0) scale(0.975,1.1)" d="M10 0 L12.4 7.2 L20 7.3 L13.9 11.8 L16.2 19 L10 14.6 L3.8 19 L6.1 11.8 L0 7.3 L7.6 7.2 Z" fill="#3a3a3a" stroke="#3a3a3a" stroke-width="0"/><path transform="translate(42.9,0) scale(0.975,1.1)" d="M10 0 L12.4 7.2 L20 7.3 L13.9 11.8 L16.2 19 L10 14.6 L3.8 19 L6.1 11.8 L0 7.3 L7.6 7.2 Z" fill="#3a3a3a" stroke="#3a3a3a" stroke-width="0"/><path transform="translate(64.35,0) scale(0.975,1.1)" d="M10 0 L12.4 7.2 L20 7.3 L13.9 11.8 L16.2 19 L10 14.6 L3.8 19 L6.1 11.8 L0 7.3 L7.6 7.2 Z" fill="#3a3a3a" stroke="#3a3a3a" stroke-width="0"/><path transform="translate(85.8,0) scale(0.975,1.1)" d="M10 0 L12.4 7.2 L20 7.3 L13.9 11.8 L16.2 19 L10 14.6 L3.8 19 L6.1 11.8 L0 7.3 L7.6 7.2 Z" fill="none" stroke="#3a3a3a" stroke-width="1.3"/></svg>
<div class="cell" style="left:691px;width:530px;top:1053.81px;font-size:24.2px;color:#000">Madison Keys 1Set</div>
<div class="cell" style="left:1221px;width:132px;top:1052.1px;font-size:27px;font-weight:bold;color:#000">$123</div>
<div class="cell" style="left:1353px;width:118px;top:1052px;font-size:27px;color:#000">1.61</div>
<div class="t" style="right:426.5px;top:1054.2px;font-size:24px;color:#000">$75</div>
<div class="pill" style="left:1568.5px;top:1048.2px;width:94.5px;height:30.4px;background:#d4edbc;border-radius:15.2px"></div>
<div class="t" style="left:1587px;top:1051.6px;font-size:27px;font-weight:bold;color:#11734b">W</div>
<div class="tri" style="left:1635px;top:1060px;border-left-width:7.8px;border-right-width:7.8px;border-top-width:8.7px;border-top-color:#11734b"></div>
<div class="cell" style="left:1677px;width:122px;top:1051.6px;font-size:27px;font-weight:bold;color:#3d85c6">0.75</div>
<div class="cell" style="left:1799px;width:181px;top:1053.4px;font-size:24.5px;color:#333">$7,187</div>
<div class="a" style="left:435px;top:1081px;width:786px;height:42px;background:#fff"></div>
<div class="a" style="left:1221px;top:1081px;width:132px;height:42px;background:#fdf0cf"></div>
<div class="a" style="left:1353px;top:1081px;width:118px;height:42px;background:#f9cb9c"></div>
<div class="a" style="left:1471px;top:1081px;width:84px;height:42px;background:#fff"></div>
<div class="a" style="left:1555px;top:1081px;width:122px;height:42px;background:#fff"></div>
<div class="a" style="left:1677px;top:1081px;width:122px;height:42px;background:#fdf0cf"></div>
<div class="a" style="left:1799px;top:1081px;width:181px;height:42px;background:#fdf0cf"></div>
<div class="a" style="left:555px;top:1122.2px;width:666px;height:1.8px;background:#b6d5a4"></div>
<div class="a" style="left:1471px;top:1122.2px;width:84px;height:1.8px;background:#b6d5a4"></div>
<div class="a" style="left:1677px;top:1122.2px;width:303px;height:1.8px;background:#b6d5a4"></div>
<div class="a" style="left:1554px;top:1121px;width:124px;height:3px;background:#000"></div>
<div class="pill" style="left:18px;top:1088px;width:172px;height:29px;background:#e0fbe8;border-radius:14.5px"></div>
<div class="t" style="right:1831.5px;top:1089.8px;font-size:24px;font-weight:bold;color:#5a3286">ATP</div>
<div class="tri" style="left:162.5px;top:1098.2px;border-left-width:7.1px;border-right-width:7.1px;border-top-width:8px;border-top-color:#5a3286"></div>
<div class="pill" style="left:327px;top:1088px;width:63px;height:23.6px;background:#ffe5a0;border-radius:12px"></div>
<div class="t" style="left:338px;top:1090.9px;font-size:21.5px;color:#473821">Live</div>
<div class="tri" style="left:405px;top:1099px;border-left-width:6.15px;border-right-width:6.15px;border-top-width:7px;border-top-color:#c8c8c8"></div>
<div class="cell" style="left:435px;width:120px;top:1089.5px;font-size:22.5px;color:#333">3-Jun</div>
<div class="pill" style="left:558px;top:1096px;width:130px;height:25px;background:#e8e9ec;border-radius:13px"></div>
<svg class="ico" style="left:570px;top:1097.3px" width="108" height="23" viewBox="-0.5 -0.5 108 23"><path transform="translate(0.0,0) scale(0.975,1.1)" d="M10 0 L12.4 7.2 L20 7.3 L13.9 11.8 L16.2 19 L10 14.6 L3.8 19 L6.1 11.8 L0 7.3 L7.6 7.2 Z" fill="#3a3a3a" stroke="#3a3a3a" stroke-width="0"/><path transform="translate(21.45,0) scale(0.975,1.1)" d="M10 0 L12.4 7.2 L20 7.3 L13.9 11.8 L16.2 19 L10 14.6 L3.8 19 L6.1 11.8 L0 7.3 L7.6 7.2 Z" fill="#3a3a3a" stroke="#3a3a3a" stroke-width="0"/><path transform="translate(42.9,0) scale(0.975,1.1)" d="M10 0 L12.4 7.2 L20 7.3 L13.9 11.8 L16.2 19 L10 14.6 L3.8 19 L6.1 11.8 L0 7.3 L7.6 7.2 Z" fill="#3a3a3a" stroke="#3a3a3a" stroke-width="0"/><path transform="translate(64.35,0) scale(0.975,1.1)" d="M10 0 L12.4 7.2 L20 7.3 L13.9 11.8 L16.2 19 L10 14.6 L3.8 19 L6.1 11.8 L0 7.3 L7.6 7.2 Z" fill="#3a3a3a" stroke="#3a3a3a" stroke-width="0"/><path transform="translate(85.8,0) scale(0.975,1.1)" d="M10 0 L12.4 7.2 L20 7.3 L13.9 11.8 L16.2 19 L10 14.6 L3.8 19 L6.1 11.8 L0 7.3 L7.6 7.2 Z" fill="none" stroke="#3a3a3a" stroke-width="1.3"/></svg>
<div class="cell" style="left:691px;width:530px;top:1095.81px;font-size:24.2px;color:#000">Nole + Mirra</div>
<div class="cell" style="left:1221px;width:132px;top:1094.1px;font-size:27px;font-weight:bold;color:#000">$100</div>
<div class="cell" style="left:1353px;width:118px;top:1094px;font-size:27px;color:#000">2.06</div>
<div class="t" style="right:426.5px;top:1096.2px;font-size:24px;color:#e0332b">-$100</div>
<div class="pill" style="left:1568.5px;top:1090.2px;width:94.5px;height:30.4px;background:#ffcfc9;border-radius:15.2px"></div>
<div class="t" style="left:1592px;top:1093.6px;font-size:27px;font-weight:bold;color:#b10202">L</div>
<div class="tri" style="left:1635px;top:1102px;border-left-width:7.8px;border-right-width:7.8px;border-top-width:8.7px;border-top-color:#b10202"></div>
<div class="cell" style="left:1677px;width:122px;top:1093.6px;font-size:27px;font-weight:bold;color:#e8251a">-1.00</div>
<div class="cell" style="left:1799px;width:181px;top:1095.4px;font-size:24.5px;color:#333">$7,087</div>
<div class="a" style="left:435px;top:1123px;width:786px;height:42px;background:#fff"></div>
<div class="a" style="left:1221px;top:1123px;width:132px;height:42px;background:#fdf0cf"></div>
<div class="a" style="left:1353px;top:1123px;width:118px;height:42px;background:#f9cb9c"></div>
<div class="a" style="left:1471px;top:1123px;width:84px;height:42px;background:#fff"></div>
<div class="a" style="left:1555px;top:1123px;width:122px;height:42px;background:#fff"></div>
<div class="a" style="left:1677px;top:1123px;width:122px;height:42px;background:#fdf0cf"></div>
<div class="a" style="left:1799px;top:1123px;width:181px;height:42px;background:#fdf0cf"></div>
<div class="a" style="left:555px;top:1164.2px;width:666px;height:1.8px;background:#b6d5a4"></div>
<div class="a" style="left:1471px;top:1164.2px;width:84px;height:1.8px;background:#b6d5a4"></div>
<div class="a" style="left:1677px;top:1164.2px;width:303px;height:1.8px;background:#b6d5a4"></div>
<div class="a" style="left:1554px;top:1163px;width:124px;height:3px;background:#000"></div>
<div class="pill" style="left:18px;top:1130px;width:172px;height:29px;background:#fbdcf8;border-radius:14.5px"></div>
<div class="t" style="right:1831.5px;top:1131.8px;font-size:24px;font-weight:bold;color:#b10202">WTA</div>
<div class="tri" style="left:162.5px;top:1140.2px;border-left-width:7.1px;border-right-width:7.1px;border-top-width:8px;border-top-color:#b10202"></div>
<div class="pill" style="left:333px;top:1130px;width:56.5px;height:23.8px;background:#e6e6e6;border-radius:12px"></div>
<div class="t" style="left:344px;top:1132.9px;font-size:21.5px;color:#1f1f1f">Pre</div>
<div class="tri" style="left:405px;top:1141px;border-left-width:6.15px;border-right-width:6.15px;border-top-width:7px;border-top-color:#c8c8c8"></div>
<div class="cell" style="left:435px;width:120px;top:1131.5px;font-size:22.5px;color:#333">3-Jun</div>
<div class="pill" style="left:558px;top:1138px;width:130px;height:25px;background:#e8e9ec;border-radius:13px"></div>
<svg class="ico" style="left:570px;top:1139.3px" width="108" height="23" viewBox="-0.5 -0.5 108 23"><path transform="translate(0.0,0) scale(0.975,1.1)" d="M10 0 L12.4 7.2 L20 7.3 L13.9 11.8 L16.2 19 L10 14.6 L3.8 19 L6.1 11.8 L0 7.3 L7.6 7.2 Z" fill="#3a3a3a" stroke="#3a3a3a" stroke-width="0"/><path transform="translate(21.45,0) scale(0.975,1.1)" d="M10 0 L12.4 7.2 L20 7.3 L13.9 11.8 L16.2 19 L10 14.6 L3.8 19 L6.1 11.8 L0 7.3 L7.6 7.2 Z" fill="#3a3a3a" stroke="#3a3a3a" stroke-width="0"/><path transform="translate(42.9,0) scale(0.975,1.1)" d="M10 0 L12.4 7.2 L20 7.3 L13.9 11.8 L16.2 19 L10 14.6 L3.8 19 L6.1 11.8 L0 7.3 L7.6 7.2 Z" fill="#3a3a3a" stroke="#3a3a3a" stroke-width="0"/><path transform="translate(64.35,0) scale(0.975,1.1)" d="M10 0 L12.4 7.2 L20 7.3 L13.9 11.8 L16.2 19 L10 14.6 L3.8 19 L6.1 11.8 L0 7.3 L7.6 7.2 Z" fill="#3a3a3a" stroke="#3a3a3a" stroke-width="0"/><path transform="translate(85.8,0) scale(0.975,1.1)" d="M10 0 L12.4 7.2 L20 7.3 L13.9 11.8 L16.2 19 L10 14.6 L3.8 19 L6.1 11.8 L0 7.3 L7.6 7.2 Z" fill="none" stroke="#3a3a3a" stroke-width="1.3"/></svg>
<div class="cell" style="left:691px;width:530px;top:1137.81px;font-size:24.2px;color:#000">Sabalenka Champ</div>
<div class="cell" style="left:1221px;width:132px;top:1136.1px;font-size:27px;font-weight:bold;color:#000">$100</div>
<div class="cell" style="left:1353px;width:118px;top:1136px;font-size:27px;color:#000">2.62</div>
<div class="t" style="right:426.5px;top:1138.2px;font-size:24px;color:#e0332b">-$100</div>
<div class="pill" style="left:1568.5px;top:1132.2px;width:94.5px;height:30.4px;background:#ffcfc9;border-radius:15.2px"></div>
<div class="t" style="left:1592px;top:1135.6px;font-size:27px;font-weight:bold;color:#b10202">L</div>
<div class="tri" style="left:1635px;top:1144px;border-left-width:7.8px;border-right-width:7.8px;border-top-width:8.7px;border-top-color:#b10202"></div>
<div class="cell" style="left:1677px;width:122px;top:1135.6px;font-size:27px;font-weight:bold;color:#e8251a">-1.00</div>
<div class="cell" style="left:1799px;width:181px;top:1137.4px;font-size:24.5px;color:#333">$6,987</div>
<div class="a" style="left:435px;top:1165px;width:786px;height:42px;background:#fff"></div>
<div class="a" style="left:1221px;top:1165px;width:132px;height:42px;background:#fdf0cf"></div>
<div class="a" style="left:1353px;top:1165px;width:118px;height:42px;background:#f9cb9c"></div>
<div class="a" style="left:1471px;top:1165px;width:84px;height:42px;background:#fff"></div>
<div class="a" style="left:1555px;top:1165px;width:122px;height:42px;background:#fff"></div>
<div class="a" style="left:1677px;top:1165px;width:122px;height:42px;background:#fdf0cf"></div>
<div class="a" style="left:1799px;top:1165px;width:181px;height:42px;background:#fdf0cf"></div>
<div class="a" style="left:555px;top:1206.2px;width:666px;height:1.8px;background:#b6d5a4"></div>
<div class="a" style="left:1471px;top:1206.2px;width:84px;height:1.8px;background:#b6d5a4"></div>
<div class="a" style="left:1677px;top:1206.2px;width:303px;height:1.8px;background:#b6d5a4"></div>
<div class="a" style="left:1554px;top:1205px;width:124px;height:3px;background:#000"></div>
<div class="pill" style="left:18px;top:1172px;width:172px;height:29px;background:#fbdcf8;border-radius:14.5px"></div>
<div class="t" style="right:1831.5px;top:1173.8px;font-size:24px;font-weight:bold;color:#b10202">WTA</div>
<div class="tri" style="left:162.5px;top:1182.2px;border-left-width:7.1px;border-right-width:7.1px;border-top-width:8px;border-top-color:#b10202"></div>
<div class="pill" style="left:333px;top:1172px;width:56.5px;height:23.8px;background:#e6e6e6;border-radius:12px"></div>
<div class="t" style="left:344px;top:1174.9px;font-size:21.5px;color:#1f1f1f">Pre</div>
<div class="tri" style="left:405px;top:1183px;border-left-width:6.15px;border-right-width:6.15px;border-top-width:7px;border-top-color:#c8c8c8"></div>
<div class="cell" style="left:435px;width:120px;top:1173.5px;font-size:22.5px;color:#333">3-Jun</div>
<div class="pill" style="left:558px;top:1180px;width:130px;height:25px;background:#e8e9ec;border-radius:13px"></div>
<svg class="ico" style="left:570px;top:1181.3px" width="108" height="23" viewBox="-0.5 -0.5 108 23"><path transform="translate(0.0,0) scale(0.975,1.1)" d="M10 0 L12.4 7.2 L20 7.3 L13.9 11.8 L16.2 19 L10 14.6 L3.8 19 L6.1 11.8 L0 7.3 L7.6 7.2 Z" fill="#3a3a3a" stroke="#3a3a3a" stroke-width="0"/><path transform="translate(21.45,0) scale(0.975,1.1)" d="M10 0 L12.4 7.2 L20 7.3 L13.9 11.8 L16.2 19 L10 14.6 L3.8 19 L6.1 11.8 L0 7.3 L7.6 7.2 Z" fill="#3a3a3a" stroke="#3a3a3a" stroke-width="0"/><path transform="translate(42.9,0) scale(0.975,1.1)" d="M10 0 L12.4 7.2 L20 7.3 L13.9 11.8 L16.2 19 L10 14.6 L3.8 19 L6.1 11.8 L0 7.3 L7.6 7.2 Z" fill="#3a3a3a" stroke="#3a3a3a" stroke-width="0"/><path transform="translate(64.35,0) scale(0.975,1.1)" d="M10 0 L12.4 7.2 L20 7.3 L13.9 11.8 L16.2 19 L10 14.6 L3.8 19 L6.1 11.8 L0 7.3 L7.6 7.2 Z" fill="#3a3a3a" stroke="#3a3a3a" stroke-width="0"/><path transform="translate(85.8,0) scale(0.975,1.1)" d="M10 0 L12.4 7.2 L20 7.3 L13.9 11.8 L16.2 19 L10 14.6 L3.8 19 L6.1 11.8 L0 7.3 L7.6 7.2 Z" fill="none" stroke="#3a3a3a" stroke-width="1.3"/></svg>
<div class="cell" style="left:691px;width:530px;top:1179.81px;font-size:24.2px;color:#000">Iga Swiatek Champ</div>
<div class="cell" style="left:1221px;width:132px;top:1178.1px;font-size:27px;font-weight:bold;color:#000">$100</div>
<div class="cell" style="left:1353px;width:118px;top:1178px;font-size:27px;color:#000">2.87</div>
<div class="t" style="right:426.5px;top:1180.2px;font-size:24px;color:#e0332b">-$100</div>
<div class="pill" style="left:1568.5px;top:1174.2px;width:94.5px;height:30.4px;background:#ffcfc9;border-radius:15.2px"></div>
<div class="t" style="left:1592px;top:1177.6px;font-size:27px;font-weight:bold;color:#b10202">L</div>
<div class="tri" style="left:1635px;top:1186px;border-left-width:7.8px;border-right-width:7.8px;border-top-width:8.7px;border-top-color:#b10202"></div>
<div class="cell" style="left:1677px;width:122px;top:1177.6px;font-size:27px;font-weight:bold;color:#e8251a">-1.00</div>
<div class="cell" style="left:1799px;width:181px;top:1179.4px;font-size:24.5px;color:#333">$6,887</div>
<div class="a" style="left:435px;top:1207px;width:786px;height:42px;background:#fff"></div>
<div class="a" style="left:1221px;top:1207px;width:132px;height:42px;background:#fdf0cf"></div>
<div class="a" style="left:1353px;top:1207px;width:118px;height:42px;background:#fdf0cf"></div>
<div class="a" style="left:1471px;top:1207px;width:84px;height:42px;background:#fff"></div>
<div class="a" style="left:1555px;top:1207px;width:122px;height:42px;background:#fff"></div>
<div class="a" style="left:1677px;top:1207px;width:122px;height:42px;background:#fdf0cf"></div>
<div class="a" style="left:1799px;top:1207px;width:181px;height:42px;background:#fdf0cf"></div>
<div class="a" style="left:555px;top:1248.2px;width:666px;height:1.8px;background:#b6d5a4"></div>
<div class="a" style="left:1471px;top:1248.2px;width:84px;height:1.8px;background:#b6d5a4"></div>
<div class="a" style="left:1677px;top:1248.2px;width:303px;height:1.8px;background:#b6d5a4"></div>
<div class="a" style="left:1554px;top:1247px;width:124px;height:3px;background:#000"></div>
<div class="pill" style="left:18px;top:1214px;width:172px;height:29px;background:#fbdcf8;border-radius:14.5px"></div>
<div class="t" style="right:1831.5px;top:1215.8px;font-size:24px;font-weight:bold;color:#b10202">WTA</div>
<div class="tri" style="left:162.5px;top:1224.2px;border-left-width:7.1px;border-right-width:7.1px;border-top-width:8px;border-top-color:#b10202"></div>
<div class="pill" style="left:327px;top:1214px;width:63px;height:23.6px;background:#ffe5a0;border-radius:12px"></div>
<div class="t" style="left:338px;top:1216.9px;font-size:21.5px;color:#473821">Live</div>
<div class="tri" style="left:405px;top:1225px;border-left-width:6.15px;border-right-width:6.15px;border-top-width:7px;border-top-color:#c8c8c8"></div>
<div class="cell" style="left:435px;width:120px;top:1215.5px;font-size:22.5px;color:#333">3-Jun</div>
<div class="pill" style="left:558px;top:1222px;width:130px;height:25px;background:#e8e9ec;border-radius:13px"></div>
<svg class="ico" style="left:570px;top:1223.3px" width="108" height="23" viewBox="-0.5 -0.5 108 23"><path transform="translate(0.0,0) scale(0.975,1.1)" d="M10 0 L12.4 7.2 L20 7.3 L13.9 11.8 L16.2 19 L10 14.6 L3.8 19 L6.1 11.8 L0 7.3 L7.6 7.2 Z" fill="#3a3a3a" stroke="#3a3a3a" stroke-width="0"/><path transform="translate(21.45,0) scale(0.975,1.1)" d="M10 0 L12.4 7.2 L20 7.3 L13.9 11.8 L16.2 19 L10 14.6 L3.8 19 L6.1 11.8 L0 7.3 L7.6 7.2 Z" fill="#3a3a3a" stroke="#3a3a3a" stroke-width="0"/><path transform="translate(42.9,0) scale(0.975,1.1)" d="M10 0 L12.4 7.2 L20 7.3 L13.9 11.8 L16.2 19 L10 14.6 L3.8 19 L6.1 11.8 L0 7.3 L7.6 7.2 Z" fill="#3a3a3a" stroke="#3a3a3a" stroke-width="0"/><path transform="translate(64.35,0) scale(0.975,1.1)" d="M10 0 L12.4 7.2 L20 7.3 L13.9 11.8 L16.2 19 L10 14.6 L3.8 19 L6.1 11.8 L0 7.3 L7.6 7.2 Z" fill="#3a3a3a" stroke="#3a3a3a" stroke-width="0"/><path transform="translate(85.8,0) scale(0.975,1.1)" d="M10 0 L12.4 7.2 L20 7.3 L13.9 11.8 L16.2 19 L10 14.6 L3.8 19 L6.1 11.8 L0 7.3 L7.6 7.2 Z" fill="none" stroke="#3a3a3a" stroke-width="1.3"/></svg>
<div class="cell" style="left:691px;width:530px;top:1221.81px;font-size:24.2px;color:#000">Mirra Andreeva</div>
<div class="cell" style="left:1221px;width:132px;top:1220.1px;font-size:27px;font-weight:bold;color:#000">$99</div>
<div class="cell" style="left:1353px;width:118px;top:1220px;font-size:27px;color:#000">1.66</div>
<div class="t" style="right:426.5px;top:1222.2px;font-size:24px;color:#e0332b">-$99</div>
<div class="pill" style="left:1568.5px;top:1216.2px;width:94.5px;height:30.4px;background:#ffcfc9;border-radius:15.2px"></div>
<div class="t" style="left:1592px;top:1219.6px;font-size:27px;font-weight:bold;color:#b10202">L</div>
<div class="tri" style="left:1635px;top:1228px;border-left-width:7.8px;border-right-width:7.8px;border-top-width:8.7px;border-top-color:#b10202"></div>
<div class="cell" style="left:1677px;width:122px;top:1219.6px;font-size:27px;font-weight:bold;color:#e8251a">-0.99</div>
<div class="cell" style="left:1799px;width:181px;top:1221.4px;font-size:24.5px;color:#333">$6,788</div>
<div class="a" style="left:435px;top:1249px;width:786px;height:42px;background:#fff"></div>
<div class="a" style="left:1221px;top:1249px;width:132px;height:42px;background:#fdf0cf"></div>
<div class="a" style="left:1353px;top:1249px;width:118px;height:42px;background:#b7b7b7"></div>
<div class="a" style="left:1471px;top:1249px;width:84px;height:42px;background:#fff"></div>
<div class="a" style="left:1555px;top:1249px;width:122px;height:42px;background:#fff"></div>
<div class="a" style="left:1677px;top:1249px;width:122px;height:42px;background:#fff"></div>
<div class="a" style="left:1799px;top:1249px;width:181px;height:42px;background:#fdf0cf"></div>
<div class="a" style="left:555px;top:1290.2px;width:666px;height:1.8px;background:#b6d5a4"></div>
<div class="a" style="left:1471px;top:1290.2px;width:84px;height:1.8px;background:#b6d5a4"></div>
<div class="a" style="left:1677px;top:1290.2px;width:303px;height:1.8px;background:#b6d5a4"></div>
<div class="a" style="left:1554px;top:1289px;width:124px;height:3px;background:#000"></div>
<div class="pill" style="left:18px;top:1256px;width:172px;height:29px;background:#215a6c;border-radius:14.5px"></div>
<div class="t" style="right:1831.5px;top:1257.8px;font-size:24px;font-weight:bold;color:#c6dbe1">Squash</div>
<div class="tri" style="left:162.5px;top:1266.2px;border-left-width:7.1px;border-right-width:7.1px;border-top-width:8px;border-top-color:#c6dbe1"></div>
<div class="pill" style="left:327px;top:1256px;width:63px;height:23.6px;background:#ffe5a0;border-radius:12px"></div>
<div class="t" style="left:338px;top:1258.9px;font-size:21.5px;color:#473821">Live</div>
<div class="tri" style="left:405px;top:1267px;border-left-width:6.15px;border-right-width:6.15px;border-top-width:7px;border-top-color:#c8c8c8"></div>
<div class="cell" style="left:435px;width:120px;top:1257.5px;font-size:22.5px;color:#333">3-Jun</div>
<div class="pill" style="left:558px;top:1264px;width:130px;height:25px;background:#e8e9ec;border-radius:13px"></div>
<svg class="ico" style="left:570px;top:1265.3px" width="108" height="23" viewBox="-0.5 -0.5 108 23"><path transform="translate(0.0,0) scale(0.975,1.1)" d="M10 0 L12.4 7.2 L20 7.3 L13.9 11.8 L16.2 19 L10 14.6 L3.8 19 L6.1 11.8 L0 7.3 L7.6 7.2 Z" fill="#3a3a3a" stroke="#3a3a3a" stroke-width="0"/><path transform="translate(21.45,0) scale(0.975,1.1)" d="M10 0 L12.4 7.2 L20 7.3 L13.9 11.8 L16.2 19 L10 14.6 L3.8 19 L6.1 11.8 L0 7.3 L7.6 7.2 Z" fill="#3a3a3a" stroke="#3a3a3a" stroke-width="0"/><path transform="translate(42.9,0) scale(0.975,1.1)" d="M10 0 L12.4 7.2 L20 7.3 L13.9 11.8 L16.2 19 L10 14.6 L3.8 19 L6.1 11.8 L0 7.3 L7.6 7.2 Z" fill="#3a3a3a" stroke="#3a3a3a" stroke-width="0"/><path transform="translate(64.35,0) scale(0.975,1.1)" d="M10 0 L12.4 7.2 L20 7.3 L13.9 11.8 L16.2 19 L10 14.6 L3.8 19 L6.1 11.8 L0 7.3 L7.6 7.2 Z" fill="#3a3a3a" stroke="#3a3a3a" stroke-width="0"/><path transform="translate(85.8,0) scale(0.975,1.1)" d="M10 0 L12.4 7.2 L20 7.3 L13.9 11.8 L16.2 19 L10 14.6 L3.8 19 L6.1 11.8 L0 7.3 L7.6 7.2 Z" fill="none" stroke="#3a3a3a" stroke-width="1.3"/></svg>
<div class="cell" style="left:691px;width:530px;top:1263.81px;font-size:24.2px;color:#000">Nour El Sherbini</div>
<div class="cell" style="left:1221px;width:132px;top:1262.1px;font-size:27px;font-weight:bold;color:#000">$6,800</div>
<div class="cell" style="left:1353px;width:118px;top:1262px;font-size:27px;color:#000">1.05</div>
<div class="t" style="right:426.5px;top:1264.2px;font-size:24px;color:#000">$340</div>
<div class="pill" style="left:1568.5px;top:1258.2px;width:94.5px;height:30.4px;background:#d4edbc;border-radius:15.2px"></div>
<div class="t" style="left:1587px;top:1261.6px;font-size:27px;font-weight:bold;color:#11734b">W</div>
<div class="tri" style="left:1635px;top:1270px;border-left-width:7.8px;border-right-width:7.8px;border-top-width:8.7px;border-top-color:#11734b"></div>
<div class="cell" style="left:1677px;width:122px;top:1261.6px;font-size:27px;font-weight:bold;color:#3d85c6">3.40</div>
<div class="cell" style="left:1799px;width:181px;top:1263.4px;font-size:24.5px;color:#333">$7,128</div>
<div class="a" style="left:435px;top:1291px;width:786px;height:42px;background:#fff"></div>
<div class="a" style="left:1221px;top:1291px;width:132px;height:42px;background:#fdf0cf"></div>
<div class="a" style="left:1353px;top:1291px;width:118px;height:42px;background:#fdf0cf"></div>
<div class="a" style="left:1471px;top:1291px;width:84px;height:42px;background:#fff"></div>
<div class="a" style="left:1555px;top:1291px;width:122px;height:42px;background:#fff"></div>
<div class="a" style="left:1677px;top:1291px;width:122px;height:42px;background:#fff"></div>
<div class="a" style="left:1799px;top:1291px;width:181px;height:42px;background:#fdf0cf"></div>
<div class="a" style="left:555px;top:1332.2px;width:666px;height:1.8px;background:#b6d5a4"></div>
<div class="a" style="left:1471px;top:1332.2px;width:84px;height:1.8px;background:#b6d5a4"></div>
<div class="a" style="left:1677px;top:1332.2px;width:303px;height:1.8px;background:#b6d5a4"></div>
<div class="a" style="left:1554px;top:1331px;width:124px;height:3px;background:#000"></div>
<div class="pill" style="left:18px;top:1298px;width:172px;height:29px;background:#215a6c;border-radius:14.5px"></div>
<div class="t" style="right:1831.5px;top:1299.8px;font-size:24px;font-weight:bold;color:#c6dbe1">Squash</div>
<div class="tri" style="left:162.5px;top:1308.2px;border-left-width:7.1px;border-right-width:7.1px;border-top-width:8px;border-top-color:#c6dbe1"></div>
<div class="pill" style="left:327px;top:1298px;width:63px;height:23.6px;background:#ffe5a0;border-radius:12px"></div>
<div class="t" style="left:338px;top:1300.9px;font-size:21.5px;color:#473821">Live</div>
<div class="tri" style="left:405px;top:1309px;border-left-width:6.15px;border-right-width:6.15px;border-top-width:7px;border-top-color:#c8c8c8"></div>
<div class="cell" style="left:435px;width:120px;top:1299.5px;font-size:22.5px;color:#333">4-Jun</div>
<div class="pill" style="left:558px;top:1306px;width:130px;height:25px;background:#e8e9ec;border-radius:13px"></div>
<svg class="ico" style="left:570px;top:1307.3px" width="108" height="23" viewBox="-0.5 -0.5 108 23"><path transform="translate(0.0,0) scale(0.975,1.1)" d="M10 0 L12.4 7.2 L20 7.3 L13.9 11.8 L16.2 19 L10 14.6 L3.8 19 L6.1 11.8 L0 7.3 L7.6 7.2 Z" fill="#3a3a3a" stroke="#3a3a3a" stroke-width="0"/><path transform="translate(21.45,0) scale(0.975,1.1)" d="M10 0 L12.4 7.2 L20 7.3 L13.9 11.8 L16.2 19 L10 14.6 L3.8 19 L6.1 11.8 L0 7.3 L7.6 7.2 Z" fill="#3a3a3a" stroke="#3a3a3a" stroke-width="0"/><path transform="translate(42.9,0) scale(0.975,1.1)" d="M10 0 L12.4 7.2 L20 7.3 L13.9 11.8 L16.2 19 L10 14.6 L3.8 19 L6.1 11.8 L0 7.3 L7.6 7.2 Z" fill="#3a3a3a" stroke="#3a3a3a" stroke-width="0"/><path transform="translate(64.35,0) scale(0.975,1.1)" d="M10 0 L12.4 7.2 L20 7.3 L13.9 11.8 L16.2 19 L10 14.6 L3.8 19 L6.1 11.8 L0 7.3 L7.6 7.2 Z" fill="#3a3a3a" stroke="#3a3a3a" stroke-width="0"/><path transform="translate(85.8,0) scale(0.975,1.1)" d="M10 0 L12.4 7.2 L20 7.3 L13.9 11.8 L16.2 19 L10 14.6 L3.8 19 L6.1 11.8 L0 7.3 L7.6 7.2 Z" fill="none" stroke="#3a3a3a" stroke-width="1.3"/></svg>
<div class="cell" style="left:691px;width:530px;top:1305.81px;font-size:24.2px;color:#000">Nele Gilis ML</div>
<div class="cell" style="left:1221px;width:132px;top:1304.1px;font-size:27px;font-weight:bold;color:#000">$140</div>
<div class="cell" style="left:1353px;width:118px;top:1304px;font-size:27px;color:#000">1.36</div>
<div class="t" style="right:426.5px;top:1306.2px;font-size:24px;color:#000">$50</div>
<div class="pill" style="left:1568.5px;top:1300.2px;width:94.5px;height:30.4px;background:#d4edbc;border-radius:15.2px"></div>
<div class="t" style="left:1587px;top:1303.6px;font-size:27px;font-weight:bold;color:#11734b">W</div>
<div class="tri" style="left:1635px;top:1312px;border-left-width:7.8px;border-right-width:7.8px;border-top-width:8.7px;border-top-color:#11734b"></div>
<div class="cell" style="left:1677px;width:122px;top:1303.6px;font-size:27px;font-weight:bold;color:#3d85c6">0.50</div>
<div class="cell" style="left:1799px;width:181px;top:1305.4px;font-size:24.5px;color:#333">$7,179</div>
<div class="a" style="left:435px;top:1333px;width:786px;height:42px;background:#fff"></div>
<div class="a" style="left:1221px;top:1333px;width:132px;height:42px;background:#fdf0cf"></div>
<div class="a" style="left:1353px;top:1333px;width:118px;height:42px;background:#f9cb9c"></div>
<div class="a" style="left:1471px;top:1333px;width:84px;height:42px;background:#fff"></div>
<div class="a" style="left:1555px;top:1333px;width:122px;height:42px;background:#fff"></div>
<div class="a" style="left:1677px;top:1333px;width:122px;height:42px;background:#fff"></div>
<div class="a" style="left:1799px;top:1333px;width:181px;height:42px;background:#fdf0cf"></div>
<div class="a" style="left:555px;top:1374.2px;width:666px;height:1.8px;background:#b6d5a4"></div>
<div class="a" style="left:1471px;top:1374.2px;width:84px;height:1.8px;background:#b6d5a4"></div>
<div class="a" style="left:1677px;top:1374.2px;width:303px;height:1.8px;background:#b6d5a4"></div>
<div class="a" style="left:1554px;top:1373px;width:124px;height:3px;background:#000"></div>
<div class="pill" style="left:18px;top:1340px;width:172px;height:29px;background:#215a6c;border-radius:14.5px"></div>
<div class="t" style="right:1831.5px;top:1341.8px;font-size:24px;font-weight:bold;color:#c6dbe1">Squash</div>
<div class="tri" style="left:162.5px;top:1350.2px;border-left-width:7.1px;border-right-width:7.1px;border-top-width:8px;border-top-color:#c6dbe1"></div>
<div class="pill" style="left:327px;top:1340px;width:63px;height:23.6px;background:#ffe5a0;border-radius:12px"></div>
<div class="t" style="left:338px;top:1342.9px;font-size:21.5px;color:#473821">Live</div>
<div class="tri" style="left:405px;top:1351px;border-left-width:6.15px;border-right-width:6.15px;border-top-width:7px;border-top-color:#c8c8c8"></div>
<div class="cell" style="left:435px;width:120px;top:1341.5px;font-size:22.5px;color:#333">4-Jun</div>
<div class="pill" style="left:558px;top:1348px;width:130px;height:25px;background:#e8e9ec;border-radius:13px"></div>
<svg class="ico" style="left:570px;top:1349.3px" width="108" height="23" viewBox="-0.5 -0.5 108 23"><path transform="translate(0.0,0) scale(0.975,1.1)" d="M10 0 L12.4 7.2 L20 7.3 L13.9 11.8 L16.2 19 L10 14.6 L3.8 19 L6.1 11.8 L0 7.3 L7.6 7.2 Z" fill="#3a3a3a" stroke="#3a3a3a" stroke-width="0"/><path transform="translate(21.45,0) scale(0.975,1.1)" d="M10 0 L12.4 7.2 L20 7.3 L13.9 11.8 L16.2 19 L10 14.6 L3.8 19 L6.1 11.8 L0 7.3 L7.6 7.2 Z" fill="#3a3a3a" stroke="#3a3a3a" stroke-width="0"/><path transform="translate(42.9,0) scale(0.975,1.1)" d="M10 0 L12.4 7.2 L20 7.3 L13.9 11.8 L16.2 19 L10 14.6 L3.8 19 L6.1 11.8 L0 7.3 L7.6 7.2 Z" fill="#3a3a3a" stroke="#3a3a3a" stroke-width="0"/><path transform="translate(64.35,0) scale(0.975,1.1)" d="M10 0 L12.4 7.2 L20 7.3 L13.9 11.8 L16.2 19 L10 14.6 L3.8 19 L6.1 11.8 L0 7.3 L7.6 7.2 Z" fill="#3a3a3a" stroke="#3a3a3a" stroke-width="0"/><path transform="translate(85.8,0) scale(0.975,1.1)" d="M10 0 L12.4 7.2 L20 7.3 L13.9 11.8 L16.2 19 L10 14.6 L3.8 19 L6.1 11.8 L0 7.3 L7.6 7.2 Z" fill="none" stroke="#3a3a3a" stroke-width="1.3"/></svg>
<div class="cell" style="left:691px;width:530px;top:1347.81px;font-size:24.2px;color:#000">Nele Gilis ML / Orfi</div>
<div class="cell" style="left:1221px;width:132px;top:1346.1px;font-size:27px;font-weight:bold;color:#000">$100</div>
<div class="cell" style="left:1353px;width:118px;top:1346px;font-size:27px;color:#000">1.81</div>
<div class="t" style="right:426.5px;top:1348.2px;font-size:24px;color:#000">$81</div>
<div class="pill" style="left:1568.5px;top:1342.2px;width:94.5px;height:30.4px;background:#d4edbc;border-radius:15.2px"></div>
<div class="t" style="left:1587px;top:1345.6px;font-size:27px;font-weight:bold;color:#11734b">W</div>
<div class="tri" style="left:1635px;top:1354px;border-left-width:7.8px;border-right-width:7.8px;border-top-width:8.7px;border-top-color:#11734b"></div>
<div class="cell" style="left:1677px;width:122px;top:1345.6px;font-size:27px;font-weight:bold;color:#3d85c6">0.81</div>
<div class="cell" style="left:1799px;width:181px;top:1347.4px;font-size:24.5px;color:#333">$7,260</div>
<div class="a" style="left:435px;top:1375px;width:786px;height:42px;background:#fff"></div>
<div class="a" style="left:1221px;top:1375px;width:132px;height:42px;background:#fdf0cf"></div>
<div class="a" style="left:1353px;top:1375px;width:118px;height:42px;background:#f9cb9c"></div>
<div class="a" style="left:1471px;top:1375px;width:84px;height:42px;background:#fff"></div>
<div class="a" style="left:1555px;top:1375px;width:122px;height:42px;background:#fff"></div>
<div class="a" style="left:1677px;top:1375px;width:122px;height:42px;background:#fff"></div>
<div class="a" style="left:1799px;top:1375px;width:181px;height:42px;background:#fdf0cf"></div>
<div class="a" style="left:555px;top:1416.2px;width:666px;height:1.8px;background:#b6d5a4"></div>
<div class="a" style="left:1471px;top:1416.2px;width:84px;height:1.8px;background:#b6d5a4"></div>
<div class="a" style="left:1677px;top:1416.2px;width:303px;height:1.8px;background:#b6d5a4"></div>
<div class="a" style="left:1554px;top:1415px;width:124px;height:3px;background:#000"></div>
<div class="pill" style="left:18px;top:1382px;width:172px;height:29px;background:#0a53a8;border-radius:14.5px"></div>
<div class="t" style="right:1831.5px;top:1383.8px;font-size:24px;font-weight:bold;color:#bfe1f6">NHL/Go…</div>
<div class="tri" style="left:162.5px;top:1392.2px;border-left-width:7.1px;border-right-width:7.1px;border-top-width:8px;border-top-color:#bfe1f6"></div>
<div class="pill" style="left:327px;top:1382px;width:63px;height:23.6px;background:#ffe5a0;border-radius:12px"></div>
<div class="t" style="left:338px;top:1384.9px;font-size:21.5px;color:#473821">Live</div>
<div class="tri" style="left:405px;top:1393px;border-left-width:6.15px;border-right-width:6.15px;border-top-width:7px;border-top-color:#c8c8c8"></div>
<div class="cell" style="left:435px;width:120px;top:1383.5px;font-size:22.5px;color:#333">4-Jun</div>
<div class="pill" style="left:558px;top:1390px;width:130px;height:25px;background:#e8e9ec;border-radius:13px"></div>
<svg class="ico" style="left:570px;top:1391.3px" width="108" height="23" viewBox="-0.5 -0.5 108 23"><path transform="translate(0.0,0) scale(0.975,1.1)" d="M10 0 L12.4 7.2 L20 7.3 L13.9 11.8 L16.2 19 L10 14.6 L3.8 19 L6.1 11.8 L0 7.3 L7.6 7.2 Z" fill="#3a3a3a" stroke="#3a3a3a" stroke-width="0"/><path transform="translate(21.45,0) scale(0.975,1.1)" d="M10 0 L12.4 7.2 L20 7.3 L13.9 11.8 L16.2 19 L10 14.6 L3.8 19 L6.1 11.8 L0 7.3 L7.6 7.2 Z" fill="#3a3a3a" stroke="#3a3a3a" stroke-width="0"/><path transform="translate(42.9,0) scale(0.975,1.1)" d="M10 0 L12.4 7.2 L20 7.3 L13.9 11.8 L16.2 19 L10 14.6 L3.8 19 L6.1 11.8 L0 7.3 L7.6 7.2 Z" fill="#3a3a3a" stroke="#3a3a3a" stroke-width="0"/><path transform="translate(64.35,0) scale(0.975,1.1)" d="M10 0 L12.4 7.2 L20 7.3 L13.9 11.8 L16.2 19 L10 14.6 L3.8 19 L6.1 11.8 L0 7.3 L7.6 7.2 Z" fill="#3a3a3a" stroke="#3a3a3a" stroke-width="0"/><path transform="translate(85.8,0) scale(0.975,1.1)" d="M10 0 L12.4 7.2 L20 7.3 L13.9 11.8 L16.2 19 L10 14.6 L3.8 19 L6.1 11.8 L0 7.3 L7.6 7.2 Z" fill="none" stroke="#3a3a3a" stroke-width="1.3"/></svg>
<div class="cell" style="left:691px;width:530px;top:1389.81px;font-size:24.2px;color:#000">DET + FLA Panthers +1.5</div>
<div class="cell" style="left:1221px;width:132px;top:1388.1px;font-size:27px;font-weight:bold;color:#000">$100</div>
<div class="cell" style="left:1353px;width:118px;top:1388px;font-size:27px;color:#000">2.12</div>
<div class="t" style="right:426.5px;top:1390.2px;font-size:24px;color:#000">$112</div>
<div class="pill" style="left:1568.5px;top:1384.2px;width:94.5px;height:30.4px;background:#d4edbc;border-radius:15.2px"></div>
<div class="t" style="left:1587px;top:1387.6px;font-size:27px;font-weight:bold;color:#11734b">W</div>
<div class="tri" style="left:1635px;top:1396px;border-left-width:7.8px;border-right-width:7.8px;border-top-width:8.7px;border-top-color:#11734b"></div>
<div class="cell" style="left:1677px;width:122px;top:1387.6px;font-size:27px;font-weight:bold;color:#3d85c6">1.12</div>
<div class="cell" style="left:1799px;width:181px;top:1389.4px;font-size:24.5px;color:#333">$7,372</div>
<div class="a" style="left:435px;top:1417px;width:786px;height:42px;background:#fff"></div>
<div class="a" style="left:1221px;top:1417px;width:132px;height:42px;background:#fdf0cf"></div>
<div class="a" style="left:1353px;top:1417px;width:118px;height:42px;background:#f9cb9c"></div>
<div class="a" style="left:1471px;top:1417px;width:84px;height:42px;background:#fff"></div>
<div class="a" style="left:1555px;top:1417px;width:122px;height:42px;background:#fff"></div>
<div class="a" style="left:1677px;top:1417px;width:122px;height:42px;background:#fdf0cf"></div>
<div class="a" style="left:1799px;top:1417px;width:181px;height:42px;background:#fdf0cf"></div>
<div class="a" style="left:555px;top:1458.2px;width:666px;height:1.8px;background:#b6d5a4"></div>
<div class="a" style="left:1471px;top:1458.2px;width:84px;height:1.8px;background:#b6d5a4"></div>
<div class="a" style="left:1677px;top:1458.2px;width:303px;height:1.8px;background:#b6d5a4"></div>
<div class="a" style="left:1554px;top:1457px;width:124px;height:3px;background:#000"></div>
<div class="pill" style="left:18px;top:1424px;width:172px;height:29px;background:#0a53a8;border-radius:14.5px"></div>
<div class="t" style="right:1831.5px;top:1425.8px;font-size:24px;font-weight:bold;color:#bfe1f6">NHL</div>
<div class="tri" style="left:162.5px;top:1434.2px;border-left-width:7.1px;border-right-width:7.1px;border-top-width:8px;border-top-color:#bfe1f6"></div>
<div class="pill" style="left:327px;top:1424px;width:63px;height:23.6px;background:#ffe5a0;border-radius:12px"></div>
<div class="t" style="left:338px;top:1426.9px;font-size:21.5px;color:#473821">Live</div>
<div class="tri" style="left:405px;top:1435px;border-left-width:6.15px;border-right-width:6.15px;border-top-width:7px;border-top-color:#c8c8c8"></div>
<div class="cell" style="left:435px;width:120px;top:1425.5px;font-size:22.5px;color:#333">4-Jun</div>
<div class="pill" style="left:558px;top:1432px;width:130px;height:25px;background:#e8e9ec;border-radius:13px"></div>
<svg class="ico" style="left:570px;top:1433.3px" width="108" height="23" viewBox="-0.5 -0.5 108 23"><path transform="translate(0.0,0) scale(0.975,1.1)" d="M10 0 L12.4 7.2 L20 7.3 L13.9 11.8 L16.2 19 L10 14.6 L3.8 19 L6.1 11.8 L0 7.3 L7.6 7.2 Z" fill="#3a3a3a" stroke="#3a3a3a" stroke-width="0"/><path transform="translate(21.45,0) scale(0.975,1.1)" d="M10 0 L12.4 7.2 L20 7.3 L13.9 11.8 L16.2 19 L10 14.6 L3.8 19 L6.1 11.8 L0 7.3 L7.6 7.2 Z" fill="#3a3a3a" stroke="#3a3a3a" stroke-width="0"/><path transform="translate(42.9,0) scale(0.975,1.1)" d="M10 0 L12.4 7.2 L20 7.3 L13.9 11.8 L16.2 19 L10 14.6 L3.8 19 L6.1 11.8 L0 7.3 L7.6 7.2 Z" fill="#3a3a3a" stroke="#3a3a3a" stroke-width="0"/><path transform="translate(64.35,0) scale(0.975,1.1)" d="M10 0 L12.4 7.2 L20 7.3 L13.9 11.8 L16.2 19 L10 14.6 L3.8 19 L6.1 11.8 L0 7.3 L7.6 7.2 Z" fill="#3a3a3a" stroke="#3a3a3a" stroke-width="0"/><path transform="translate(85.8,0) scale(0.975,1.1)" d="M10 0 L12.4 7.2 L20 7.3 L13.9 11.8 L16.2 19 L10 14.6 L3.8 19 L6.1 11.8 L0 7.3 L7.6 7.2 Z" fill="none" stroke="#3a3a3a" stroke-width="1.3"/></svg>
<div class="cell" style="left:691px;width:530px;top:1431.81px;font-size:24.2px;color:#000">FLA Panthers</div>
<div class="cell" style="left:1221px;width:132px;top:1430.1px;font-size:27px;font-weight:bold;color:#000">$100</div>
<div class="cell" style="left:1353px;width:118px;top:1430px;font-size:27px;color:#000">2.00</div>
<div class="t" style="right:426.5px;top:1432.2px;font-size:24px;color:#e0332b">-$100</div>
<div class="pill" style="left:1568.5px;top:1426.2px;width:94.5px;height:30.4px;background:#ffcfc9;border-radius:15.2px"></div>
<div class="t" style="left:1592px;top:1429.6px;font-size:27px;font-weight:bold;color:#b10202">L</div>
<div class="tri" style="left:1635px;top:1438px;border-left-width:7.8px;border-right-width:7.8px;border-top-width:8.7px;border-top-color:#b10202"></div>
<div class="cell" style="left:1677px;width:122px;top:1429.6px;font-size:27px;font-weight:bold;color:#e8251a">-1.00</div>
<div class="cell" style="left:1799px;width:181px;top:1431.4px;font-size:24.5px;color:#333">$7,272</div>
<div class="a" style="left:435px;top:1459px;width:786px;height:42px;background:#fff"></div>
<div class="a" style="left:1221px;top:1459px;width:132px;height:42px;background:#fdf0cf"></div>
<div class="a" style="left:1353px;top:1459px;width:118px;height:42px;background:#f9cb9c"></div>
<div class="a" style="left:1471px;top:1459px;width:84px;height:42px;background:#fff"></div>
<div class="a" style="left:1555px;top:1459px;width:122px;height:42px;background:#fff"></div>
<div class="a" style="left:1677px;top:1459px;width:122px;height:42px;background:#fff"></div>
<div class="a" style="left:1799px;top:1459px;width:181px;height:42px;background:#fdf0cf"></div>
<div class="a" style="left:555px;top:1500.2px;width:666px;height:1.8px;background:#b6d5a4"></div>
<div class="a" style="left:1471px;top:1500.2px;width:84px;height:1.8px;background:#b6d5a4"></div>
<div class="a" style="left:1677px;top:1500.2px;width:303px;height:1.8px;background:#b6d5a4"></div>
<div class="a" style="left:1554px;top:1499px;width:124px;height:3px;background:#000"></div>
<div class="pill" style="left:18px;top:1466px;width:172px;height:29px;background:#473821;border-radius:14.5px"></div>
<div class="t" style="right:1831.5px;top:1467.8px;font-size:24px;font-weight:bold;color:#ffe5a0">MLB</div>
<div class="tri" style="left:162.5px;top:1476.2px;border-left-width:7.1px;border-right-width:7.1px;border-top-width:8px;border-top-color:#ffe5a0"></div>
<div class="pill" style="left:327px;top:1466px;width:63px;height:23.6px;background:#ffe5a0;border-radius:12px"></div>
<div class="t" style="left:338px;top:1468.9px;font-size:21.5px;color:#473821">Live</div>
<div class="tri" style="left:405px;top:1477px;border-left-width:6.15px;border-right-width:6.15px;border-top-width:7px;border-top-color:#c8c8c8"></div>
<div class="cell" style="left:435px;width:120px;top:1467.5px;font-size:22.5px;color:#333">4-Jun</div>
<div class="pill" style="left:558px;top:1474px;width:130px;height:25px;background:#e8e9ec;border-radius:13px"></div>
<svg class="ico" style="left:570px;top:1475.3px" width="108" height="23" viewBox="-0.5 -0.5 108 23"><path transform="translate(0.0,0) scale(0.975,1.1)" d="M10 0 L12.4 7.2 L20 7.3 L13.9 11.8 L16.2 19 L10 14.6 L3.8 19 L6.1 11.8 L0 7.3 L7.6 7.2 Z" fill="#3a3a3a" stroke="#3a3a3a" stroke-width="0"/><path transform="translate(21.45,0) scale(0.975,1.1)" d="M10 0 L12.4 7.2 L20 7.3 L13.9 11.8 L16.2 19 L10 14.6 L3.8 19 L6.1 11.8 L0 7.3 L7.6 7.2 Z" fill="#3a3a3a" stroke="#3a3a3a" stroke-width="0"/><path transform="translate(42.9,0) scale(0.975,1.1)" d="M10 0 L12.4 7.2 L20 7.3 L13.9 11.8 L16.2 19 L10 14.6 L3.8 19 L6.1 11.8 L0 7.3 L7.6 7.2 Z" fill="#3a3a3a" stroke="#3a3a3a" stroke-width="0"/><path transform="translate(64.35,0) scale(0.975,1.1)" d="M10 0 L12.4 7.2 L20 7.3 L13.9 11.8 L16.2 19 L10 14.6 L3.8 19 L6.1 11.8 L0 7.3 L7.6 7.2 Z" fill="#3a3a3a" stroke="#3a3a3a" stroke-width="0"/><path transform="translate(85.8,0) scale(0.975,1.1)" d="M10 0 L12.4 7.2 L20 7.3 L13.9 11.8 L16.2 19 L10 14.6 L3.8 19 L6.1 11.8 L0 7.3 L7.6 7.2 Z" fill="none" stroke="#3a3a3a" stroke-width="1.3"/></svg>
<div class="cell" style="left:691px;width:530px;top:1473.81px;font-size:24.2px;color:#000">NYM+1.5 / DET</div>
<div class="cell" style="left:1221px;width:132px;top:1472.1px;font-size:27px;font-weight:bold;color:#000">$70</div>
<div class="cell" style="left:1353px;width:118px;top:1472px;font-size:27px;color:#000">2.00</div>
<div class="t" style="right:426.5px;top:1474.2px;font-size:24px;color:#000">$70</div>
<div class="pill" style="left:1568.5px;top:1468.2px;width:94.5px;height:30.4px;background:#d4edbc;border-radius:15.2px"></div>
<div class="t" style="left:1587px;top:1471.6px;font-size:27px;font-weight:bold;color:#11734b">W</div>
<div class="tri" style="left:1635px;top:1480px;border-left-width:7.8px;border-right-width:7.8px;border-top-width:8.7px;border-top-color:#11734b"></div>
<div class="cell" style="left:1677px;width:122px;top:1471.6px;font-size:27px;font-weight:bold;color:#3d85c6">0.70</div>
<div class="cell" style="left:1799px;width:181px;top:1473.4px;font-size:24.5px;color:#333">$7,342</div>
<div class="a" style="left:435px;top:1501px;width:786px;height:42px;background:#fff"></div>
<div class="a" style="left:1221px;top:1501px;width:132px;height:42px;background:#fdf0cf"></div>
<div class="a" style="left:1353px;top:1501px;width:118px;height:42px;background:#f9cb9c"></div>
<div class="a" style="left:1471px;top:1501px;width:84px;height:42px;background:#fff"></div>
<div class="a" style="left:1555px;top:1501px;width:122px;height:42px;background:#fff"></div>
<div class="a" style="left:1677px;top:1501px;width:122px;height:42px;background:#fdf0cf"></div>
<div class="a" style="left:1799px;top:1501px;width:181px;height:42px;background:#fdf0cf"></div>
<div class="a" style="left:555px;top:1542.2px;width:666px;height:1.8px;background:#b6d5a4"></div>
<div class="a" style="left:1471px;top:1542.2px;width:84px;height:1.8px;background:#b6d5a4"></div>
<div class="a" style="left:1677px;top:1542.2px;width:303px;height:1.8px;background:#b6d5a4"></div>
<div class="a" style="left:1554px;top:1541px;width:124px;height:3px;background:#000"></div>
<div class="pill" style="left:18px;top:1508px;width:172px;height:29px;background:#473821;border-radius:14.5px"></div>
<div class="t" style="right:1831.5px;top:1509.8px;font-size:24px;font-weight:bold;color:#ffe5a0">MLB</div>
<div class="tri" style="left:162.5px;top:1518.2px;border-left-width:7.1px;border-right-width:7.1px;border-top-width:8px;border-top-color:#ffe5a0"></div>
<div class="pill" style="left:327px;top:1508px;width:63px;height:23.6px;background:#ffe5a0;border-radius:12px"></div>
<div class="t" style="left:338px;top:1510.9px;font-size:21.5px;color:#473821">Live</div>
<div class="tri" style="left:405px;top:1519px;border-left-width:6.15px;border-right-width:6.15px;border-top-width:7px;border-top-color:#c8c8c8"></div>
<div class="cell" style="left:435px;width:120px;top:1509.5px;font-size:22.5px;color:#333">4-Jun</div>
<div class="pill" style="left:558px;top:1516px;width:130px;height:25px;background:#e8e9ec;border-radius:13px"></div>
<svg class="ico" style="left:570px;top:1517.3px" width="108" height="23" viewBox="-0.5 -0.5 108 23"><path transform="translate(0.0,0) scale(0.975,1.1)" d="M10 0 L12.4 7.2 L20 7.3 L13.9 11.8 L16.2 19 L10 14.6 L3.8 19 L6.1 11.8 L0 7.3 L7.6 7.2 Z" fill="#3a3a3a" stroke="#3a3a3a" stroke-width="0"/><path transform="translate(21.45,0) scale(0.975,1.1)" d="M10 0 L12.4 7.2 L20 7.3 L13.9 11.8 L16.2 19 L10 14.6 L3.8 19 L6.1 11.8 L0 7.3 L7.6 7.2 Z" fill="#3a3a3a" stroke="#3a3a3a" stroke-width="0"/><path transform="translate(42.9,0) scale(0.975,1.1)" d="M10 0 L12.4 7.2 L20 7.3 L13.9 11.8 L16.2 19 L10 14.6 L3.8 19 L6.1 11.8 L0 7.3 L7.6 7.2 Z" fill="#3a3a3a" stroke="#3a3a3a" stroke-width="0"/><path transform="translate(64.35,0) scale(0.975,1.1)" d="M10 0 L12.4 7.2 L20 7.3 L13.9 11.8 L16.2 19 L10 14.6 L3.8 19 L6.1 11.8 L0 7.3 L7.6 7.2 Z" fill="#3a3a3a" stroke="#3a3a3a" stroke-width="0"/><path transform="translate(85.8,0) scale(0.975,1.1)" d="M10 0 L12.4 7.2 L20 7.3 L13.9 11.8 L16.2 19 L10 14.6 L3.8 19 L6.1 11.8 L0 7.3 L7.6 7.2 Z" fill="none" stroke="#3a3a3a" stroke-width="1.3"/></svg>
<div class="cell" style="left:691px;width:530px;top:1515.81px;font-size:24.2px;color:#000">A´s</div>
<div class="cell" style="left:1221px;width:132px;top:1514.1px;font-size:27px;font-weight:bold;color:#000">$70</div>
<div class="cell" style="left:1353px;width:118px;top:1514px;font-size:27px;color:#000">2.65</div>
<div class="t" style="right:426.5px;top:1516.2px;font-size:24px;color:#e0332b">-$70</div>
<div class="pill" style="left:1568.5px;top:1510.2px;width:94.5px;height:30.4px;background:#ffcfc9;border-radius:15.2px"></div>
<div class="t" style="left:1592px;top:1513.6px;font-size:27px;font-weight:bold;color:#b10202">L</div>
<div class="tri" style="left:1635px;top:1522px;border-left-width:7.8px;border-right-width:7.8px;border-top-width:8.7px;border-top-color:#b10202"></div>
<div class="cell" style="left:1677px;width:122px;top:1513.6px;font-size:27px;font-weight:bold;color:#e8251a">-0.70</div>
<div class="cell" style="left:1799px;width:181px;top:1515.4px;font-size:24.5px;color:#333">$7,272</div>
<div class="a" style="left:435px;top:1543px;width:786px;height:42px;background:#fff"></div>
<div class="a" style="left:1221px;top:1543px;width:132px;height:42px;background:#fdf0cf"></div>
<div class="a" style="left:1353px;top:1543px;width:118px;height:42px;background:#f9cb9c"></div>
<div class="a" style="left:1471px;top:1543px;width:84px;height:42px;background:#fff"></div>
<div class="a" style="left:1555px;top:1543px;width:122px;height:42px;background:#fff"></div>
<div class="a" style="left:1677px;top:1543px;width:122px;height:42px;background:#fdf0cf"></div>
<div class="a" style="left:1799px;top:1543px;width:181px;height:42px;background:#fdf0cf"></div>
<div class="a" style="left:555px;top:1584.2px;width:666px;height:1.8px;background:#b6d5a4"></div>
<div class="a" style="left:1471px;top:1584.2px;width:84px;height:1.8px;background:#b6d5a4"></div>
<div class="a" style="left:1677px;top:1584.2px;width:303px;height:1.8px;background:#b6d5a4"></div>
<div class="a" style="left:1554px;top:1583px;width:124px;height:3px;background:#000"></div>
<div class="pill" style="left:18px;top:1550px;width:172px;height:29px;background:#473821;border-radius:14.5px"></div>
<div class="t" style="right:1831.5px;top:1551.8px;font-size:24px;font-weight:bold;color:#ffe5a0">MLB</div>
<div class="tri" style="left:162.5px;top:1560.2px;border-left-width:7.1px;border-right-width:7.1px;border-top-width:8px;border-top-color:#ffe5a0"></div>
<div class="pill" style="left:327px;top:1550px;width:63px;height:23.6px;background:#ffe5a0;border-radius:12px"></div>
<div class="t" style="left:338px;top:1552.9px;font-size:21.5px;color:#473821">Live</div>
<div class="tri" style="left:405px;top:1561px;border-left-width:6.15px;border-right-width:6.15px;border-top-width:7px;border-top-color:#c8c8c8"></div>
<div class="cell" style="left:435px;width:120px;top:1551.5px;font-size:22.5px;color:#333">4-Jun</div>
<div class="pill" style="left:558px;top:1558px;width:130px;height:25px;background:#e8e9ec;border-radius:13px"></div>
<svg class="ico" style="left:570px;top:1559.3px" width="108" height="23" viewBox="-0.5 -0.5 108 23"><path transform="translate(0.0,0) scale(0.975,1.1)" d="M10 0 L12.4 7.2 L20 7.3 L13.9 11.8 L16.2 19 L10 14.6 L3.8 19 L6.1 11.8 L0 7.3 L7.6 7.2 Z" fill="#3a3a3a" stroke="#3a3a3a" stroke-width="0"/><path transform="translate(21.45,0) scale(0.975,1.1)" d="M10 0 L12.4 7.2 L20 7.3 L13.9 11.8 L16.2 19 L10 14.6 L3.8 19 L6.1 11.8 L0 7.3 L7.6 7.2 Z" fill="#3a3a3a" stroke="#3a3a3a" stroke-width="0"/><path transform="translate(42.9,0) scale(0.975,1.1)" d="M10 0 L12.4 7.2 L20 7.3 L13.9 11.8 L16.2 19 L10 14.6 L3.8 19 L6.1 11.8 L0 7.3 L7.6 7.2 Z" fill="#3a3a3a" stroke="#3a3a3a" stroke-width="0"/><path transform="translate(64.35,0) scale(0.975,1.1)" d="M10 0 L12.4 7.2 L20 7.3 L13.9 11.8 L16.2 19 L10 14.6 L3.8 19 L6.1 11.8 L0 7.3 L7.6 7.2 Z" fill="#3a3a3a" stroke="#3a3a3a" stroke-width="0"/><path transform="translate(85.8,0) scale(0.975,1.1)" d="M10 0 L12.4 7.2 L20 7.3 L13.9 11.8 L16.2 19 L10 14.6 L3.8 19 L6.1 11.8 L0 7.3 L7.6 7.2 Z" fill="none" stroke="#3a3a3a" stroke-width="1.3"/></svg>
<div class="cell" style="left:691px;width:530px;top:1557.81px;font-size:24.2px;color:#000">DET+SEA</div>
<div class="cell" style="left:1221px;width:132px;top:1556.1px;font-size:27px;font-weight:bold;color:#000">$70</div>
<div class="cell" style="left:1353px;width:118px;top:1556px;font-size:27px;color:#000">2.30</div>
<div class="t" style="right:426.5px;top:1558.2px;font-size:24px;color:#e0332b">-$70</div>
<div class="pill" style="left:1568.5px;top:1552.2px;width:94.5px;height:30.4px;background:#ffcfc9;border-radius:15.2px"></div>
<div class="t" style="left:1592px;top:1555.6px;font-size:27px;font-weight:bold;color:#b10202">L</div>
<div class="tri" style="left:1635px;top:1564px;border-left-width:7.8px;border-right-width:7.8px;border-top-width:8.7px;border-top-color:#b10202"></div>
<div class="cell" style="left:1677px;width:122px;top:1555.6px;font-size:27px;font-weight:bold;color:#e8251a">-0.70</div>
<div class="cell" style="left:1799px;width:181px;top:1557.4px;font-size:24.5px;color:#333">$7,202</div>
<div class="a" style="left:435px;top:1585px;width:786px;height:42px;background:#fff"></div>
<div class="a" style="left:1221px;top:1585px;width:132px;height:42px;background:#fdf0cf"></div>
<div class="a" style="left:1353px;top:1585px;width:118px;height:42px;background:#f9cb9c"></div>
<div class="a" style="left:1471px;top:1585px;width:84px;height:42px;background:#fff"></div>
<div class="a" style="left:1555px;top:1585px;width:122px;height:42px;background:#fff"></div>
<div class="a" style="left:1677px;top:1585px;width:122px;height:42px;background:#fff"></div>
<div class="a" style="left:1799px;top:1585px;width:181px;height:42px;background:#fdf0cf"></div>
<div class="a" style="left:555px;top:1626.2px;width:666px;height:1.8px;background:#b6d5a4"></div>
<div class="a" style="left:1471px;top:1626.2px;width:84px;height:1.8px;background:#b6d5a4"></div>
<div class="a" style="left:1677px;top:1626.2px;width:303px;height:1.8px;background:#b6d5a4"></div>
<div class="a" style="left:1554px;top:1625px;width:124px;height:3px;background:#000"></div>
<div class="pill" style="left:18px;top:1592px;width:172px;height:29px;background:#473821;border-radius:14.5px"></div>
<div class="t" style="right:1831.5px;top:1593.8px;font-size:24px;font-weight:bold;color:#ffe5a0">MLB</div>
<div class="tri" style="left:162.5px;top:1602.2px;border-left-width:7.1px;border-right-width:7.1px;border-top-width:8px;border-top-color:#ffe5a0"></div>
<div class="pill" style="left:327px;top:1592px;width:63px;height:23.6px;background:#ffe5a0;border-radius:12px"></div>
<div class="t" style="left:338px;top:1594.9px;font-size:21.5px;color:#473821">Live</div>
<div class="tri" style="left:405px;top:1603px;border-left-width:6.15px;border-right-width:6.15px;border-top-width:7px;border-top-color:#c8c8c8"></div>
<div class="cell" style="left:435px;width:120px;top:1593.5px;font-size:22.5px;color:#333">4-Jun</div>
<div class="pill" style="left:558px;top:1600px;width:130px;height:25px;background:#e8e9ec;border-radius:13px"></div>
<svg class="ico" style="left:570px;top:1601.3px" width="108" height="23" viewBox="-0.5 -0.5 108 23"><path transform="translate(0.0,0) scale(0.975,1.1)" d="M10 0 L12.4 7.2 L20 7.3 L13.9 11.8 L16.2 19 L10 14.6 L3.8 19 L6.1 11.8 L0 7.3 L7.6 7.2 Z" fill="#3a3a3a" stroke="#3a3a3a" stroke-width="0"/><path transform="translate(21.45,0) scale(0.975,1.1)" d="M10 0 L12.4 7.2 L20 7.3 L13.9 11.8 L16.2 19 L10 14.6 L3.8 19 L6.1 11.8 L0 7.3 L7.6 7.2 Z" fill="#3a3a3a" stroke="#3a3a3a" stroke-width="0"/><path transform="translate(42.9,0) scale(0.975,1.1)" d="M10 0 L12.4 7.2 L20 7.3 L13.9 11.8 L16.2 19 L10 14.6 L3.8 19 L6.1 11.8 L0 7.3 L7.6 7.2 Z" fill="#3a3a3a" stroke="#3a3a3a" stroke-width="0"/><path transform="translate(64.35,0) scale(0.975,1.1)" d="M10 0 L12.4 7.2 L20 7.3 L13.9 11.8 L16.2 19 L10 14.6 L3.8 19 L6.1 11.8 L0 7.3 L7.6 7.2 Z" fill="#3a3a3a" stroke="#3a3a3a" stroke-width="0"/><path transform="translate(85.8,0) scale(0.975,1.1)" d="M10 0 L12.4 7.2 L20 7.3 L13.9 11.8 L16.2 19 L10 14.6 L3.8 19 L6.1 11.8 L0 7.3 L7.6 7.2 Z" fill="none" stroke="#3a3a3a" stroke-width="1.3"/></svg>
<div class="cell" style="left:691px;width:530px;top:1599.81px;font-size:24.2px;color:#000">TB Rays</div>
<div class="cell" style="left:1221px;width:132px;top:1598.1px;font-size:27px;font-weight:bold;color:#000">$70</div>
<div class="cell" style="left:1353px;width:118px;top:1598px;font-size:27px;color:#000">1.76</div>
<div class="t" style="right:426.5px;top:1600.2px;font-size:24px;color:#000">$53</div>
<div class="pill" style="left:1568.5px;top:1594.2px;width:94.5px;height:30.4px;background:#d4edbc;border-radius:15.2px"></div>
<div class="t" style="left:1587px;top:1597.6px;font-size:27px;font-weight:bold;color:#11734b">W</div>
<div class="tri" style="left:1635px;top:1606px;border-left-width:7.8px;border-right-width:7.8px;border-top-width:8.7px;border-top-color:#11734b"></div>
<div class="cell" style="left:1677px;width:122px;top:1597.6px;font-size:27px;font-weight:bold;color:#3d85c6">0.53</div>
<div class="cell" style="left:1799px;width:181px;top:1599.4px;font-size:24.5px;color:#333">$7,255</div>
<div class="a" style="left:435px;top:1627px;width:786px;height:42px;background:#fff"></div>
<div class="a" style="left:1221px;top:1627px;width:132px;height:42px;background:#fdf0cf"></div>
<div class="a" style="left:1353px;top:1627px;width:118px;height:42px;background:#f9cb9c"></div>
<div class="a" style="left:1471px;top:1627px;width:84px;height:42px;background:#fff"></div>
<div class="a" style="left:1555px;top:1627px;width:122px;height:42px;background:#fff"></div>
<div class="a" style="left:1677px;top:1627px;width:122px;height:42px;background:#fdf0cf"></div>
<div class="a" style="left:1799px;top:1627px;width:181px;height:42px;background:#fdf0cf"></div>
<div class="a" style="left:555px;top:1668.2px;width:666px;height:1.8px;background:#b6d5a4"></div>
<div class="a" style="left:1471px;top:1668.2px;width:84px;height:1.8px;background:#b6d5a4"></div>
<div class="a" style="left:1677px;top:1668.2px;width:303px;height:1.8px;background:#b6d5a4"></div>
<div class="a" style="left:1554px;top:1667px;width:124px;height:3px;background:#000"></div>
<div class="pill" style="left:18px;top:1634px;width:172px;height:29px;background:#473821;border-radius:14.5px"></div>
<div class="t" style="right:1831.5px;top:1635.8px;font-size:24px;font-weight:bold;color:#ffe5a0">MLB</div>
<div class="tri" style="left:162.5px;top:1644.2px;border-left-width:7.1px;border-right-width:7.1px;border-top-width:8px;border-top-color:#ffe5a0"></div>
<div class="pill" style="left:327px;top:1634px;width:63px;height:23.6px;background:#ffe5a0;border-radius:12px"></div>
<div class="t" style="left:338px;top:1636.9px;font-size:21.5px;color:#473821">Live</div>
<div class="tri" style="left:405px;top:1645px;border-left-width:6.15px;border-right-width:6.15px;border-top-width:7px;border-top-color:#c8c8c8"></div>
<div class="cell" style="left:435px;width:120px;top:1635.5px;font-size:22.5px;color:#333">4-Jun</div>
<div class="pill" style="left:558px;top:1642px;width:130px;height:25px;background:#e8e9ec;border-radius:13px"></div>
<svg class="ico" style="left:570px;top:1643.3px" width="108" height="23" viewBox="-0.5 -0.5 108 23"><path transform="translate(0.0,0) scale(0.975,1.1)" d="M10 0 L12.4 7.2 L20 7.3 L13.9 11.8 L16.2 19 L10 14.6 L3.8 19 L6.1 11.8 L0 7.3 L7.6 7.2 Z" fill="#3a3a3a" stroke="#3a3a3a" stroke-width="0"/><path transform="translate(21.45,0) scale(0.975,1.1)" d="M10 0 L12.4 7.2 L20 7.3 L13.9 11.8 L16.2 19 L10 14.6 L3.8 19 L6.1 11.8 L0 7.3 L7.6 7.2 Z" fill="#3a3a3a" stroke="#3a3a3a" stroke-width="0"/><path transform="translate(42.9,0) scale(0.975,1.1)" d="M10 0 L12.4 7.2 L20 7.3 L13.9 11.8 L16.2 19 L10 14.6 L3.8 19 L6.1 11.8 L0 7.3 L7.6 7.2 Z" fill="#3a3a3a" stroke="#3a3a3a" stroke-width="0"/><path transform="translate(64.35,0) scale(0.975,1.1)" d="M10 0 L12.4 7.2 L20 7.3 L13.9 11.8 L16.2 19 L10 14.6 L3.8 19 L6.1 11.8 L0 7.3 L7.6 7.2 Z" fill="#3a3a3a" stroke="#3a3a3a" stroke-width="0"/><path transform="translate(85.8,0) scale(0.975,1.1)" d="M10 0 L12.4 7.2 L20 7.3 L13.9 11.8 L16.2 19 L10 14.6 L3.8 19 L6.1 11.8 L0 7.3 L7.6 7.2 Z" fill="none" stroke="#3a3a3a" stroke-width="1.3"/></svg>
<div class="cell" style="left:691px;width:530px;top:1641.81px;font-size:24.2px;color:#000">o9.5 NYY</div>
<div class="cell" style="left:1221px;width:132px;top:1640.1px;font-size:27px;font-weight:bold;color:#000">$70</div>
<div class="cell" style="left:1353px;width:118px;top:1640px;font-size:27px;color:#000">2.00</div>
<div class="t" style="right:426.5px;top:1642.2px;font-size:24px;color:#e0332b">-$70</div>
<div class="pill" style="left:1568.5px;top:1636.2px;width:94.5px;height:30.4px;background:#ffcfc9;border-radius:15.2px"></div>
<div class="t" style="left:1592px;top:1639.6px;font-size:27px;font-weight:bold;color:#b10202">L</div>
<div class="tri" style="left:1635px;top:1648px;border-left-width:7.8px;border-right-width:7.8px;border-top-width:8.7px;border-top-color:#b10202"></div>
<div class="cell" style="left:1677px;width:122px;top:1639.6px;font-size:27px;font-weight:bold;color:#e8251a">-0.70</div>
<div class="cell" style="left:1799px;width:181px;top:1641.4px;font-size:24.5px;color:#333">$7,185</div>
<div class="a" style="left:435px;top:1669px;width:786px;height:42px;background:#fff"></div>
<div class="a" style="left:1221px;top:1669px;width:132px;height:42px;background:#fdf0cf"></div>
<div class="a" style="left:1353px;top:1669px;width:118px;height:42px;background:#f9cb9c"></div>
<div class="a" style="left:1471px;top:1669px;width:84px;height:42px;background:#fff"></div>
<div class="a" style="left:1555px;top:1669px;width:122px;height:42px;background:#fff"></div>
<div class="a" style="left:1677px;top:1669px;width:122px;height:42px;background:#fdf0cf"></div>
<div class="a" style="left:1799px;top:1669px;width:181px;height:42px;background:#fdf0cf"></div>
<div class="a" style="left:555px;top:1710.2px;width:666px;height:1.8px;background:#b6d5a4"></div>
<div class="a" style="left:1471px;top:1710.2px;width:84px;height:1.8px;background:#b6d5a4"></div>
<div class="a" style="left:1677px;top:1710.2px;width:303px;height:1.8px;background:#b6d5a4"></div>
<div class="a" style="left:1554px;top:1709px;width:124px;height:3px;background:#000"></div>
<div class="pill" style="left:18px;top:1676px;width:172px;height:29px;background:#473821;border-radius:14.5px"></div>
<div class="t" style="right:1831.5px;top:1677.8px;font-size:24px;font-weight:bold;color:#ffe5a0">MLB</div>
<div class="tri" style="left:162.5px;top:1686.2px;border-left-width:7.1px;border-right-width:7.1px;border-top-width:8px;border-top-color:#ffe5a0"></div>
<div class="pill" style="left:327px;top:1676px;width:63px;height:23.6px;background:#ffe5a0;border-radius:12px"></div>
<div class="t" style="left:338px;top:1678.9px;font-size:21.5px;color:#473821">Live</div>
<div class="tri" style="left:405px;top:1687px;border-left-width:6.15px;border-right-width:6.15px;border-top-width:7px;border-top-color:#c8c8c8"></div>
<div class="cell" style="left:435px;width:120px;top:1677.5px;font-size:22.5px;color:#333">4-Jun</div>
<div class="pill" style="left:558px;top:1684px;width:130px;height:25px;background:#e8e9ec;border-radius:13px"></div>
<svg class="ico" style="left:570px;top:1685.3px" width="108" height="23" viewBox="-0.5 -0.5 108 23"><path transform="translate(0.0,0) scale(0.975,1.1)" d="M10 0 L12.4 7.2 L20 7.3 L13.9 11.8 L16.2 19 L10 14.6 L3.8 19 L6.1 11.8 L0 7.3 L7.6 7.2 Z" fill="#3a3a3a" stroke="#3a3a3a" stroke-width="0"/><path transform="translate(21.45,0) scale(0.975,1.1)" d="M10 0 L12.4 7.2 L20 7.3 L13.9 11.8 L16.2 19 L10 14.6 L3.8 19 L6.1 11.8 L0 7.3 L7.6 7.2 Z" fill="#3a3a3a" stroke="#3a3a3a" stroke-width="0"/><path transform="translate(42.9,0) scale(0.975,1.1)" d="M10 0 L12.4 7.2 L20 7.3 L13.9 11.8 L16.2 19 L10 14.6 L3.8 19 L6.1 11.8 L0 7.3 L7.6 7.2 Z" fill="#3a3a3a" stroke="#3a3a3a" stroke-width="0"/><path transform="translate(64.35,0) scale(0.975,1.1)" d="M10 0 L12.4 7.2 L20 7.3 L13.9 11.8 L16.2 19 L10 14.6 L3.8 19 L6.1 11.8 L0 7.3 L7.6 7.2 Z" fill="#3a3a3a" stroke="#3a3a3a" stroke-width="0"/><path transform="translate(85.8,0) scale(0.975,1.1)" d="M10 0 L12.4 7.2 L20 7.3 L13.9 11.8 L16.2 19 L10 14.6 L3.8 19 L6.1 11.8 L0 7.3 L7.6 7.2 Z" fill="none" stroke="#3a3a3a" stroke-width="1.3"/></svg>
<div class="cell" style="left:691px;width:530px;top:1683.81px;font-size:24.2px;color:#000">NYY+ATL</div>
<div class="cell" style="left:1221px;width:132px;top:1682.1px;font-size:27px;font-weight:bold;color:#000">$70</div>
<div class="cell" style="left:1353px;width:118px;top:1682px;font-size:27px;color:#000">2.10</div>
<div class="t" style="right:426.5px;top:1684.2px;font-size:24px;color:#e0332b">-$70</div>
<div class="pill" style="left:1568.5px;top:1678.2px;width:94.5px;height:30.4px;background:#ffcfc9;border-radius:15.2px"></div>
<div class="t" style="left:1592px;top:1681.6px;font-size:27px;font-weight:bold;color:#b10202">L</div>
<div class="tri" style="left:1635px;top:1690px;border-left-width:7.8px;border-right-width:7.8px;border-top-width:8.7px;border-top-color:#b10202"></div>
<div class="cell" style="left:1677px;width:122px;top:1681.6px;font-size:27px;font-weight:bold;color:#e8251a">-0.70</div>
<div class="cell" style="left:1799px;width:181px;top:1683.4px;font-size:24.5px;color:#333">$7,115</div>
<div class="a" style="left:435px;top:1711px;width:786px;height:42px;background:#fff"></div>
<div class="a" style="left:1221px;top:1711px;width:132px;height:42px;background:#fdf0cf"></div>
<div class="a" style="left:1353px;top:1711px;width:118px;height:42px;background:#f9cb9c"></div>
<div class="a" style="left:1471px;top:1711px;width:84px;height:42px;background:#fff"></div>
<div class="a" style="left:1555px;top:1711px;width:122px;height:42px;background:#fff"></div>
<div class="a" style="left:1677px;top:1711px;width:122px;height:42px;background:#fff"></div>
<div class="a" style="left:1799px;top:1711px;width:181px;height:42px;background:#fdf0cf"></div>
<div class="a" style="left:555px;top:1752.2px;width:666px;height:1.8px;background:#b6d5a4"></div>
<div class="a" style="left:1471px;top:1752.2px;width:84px;height:1.8px;background:#b6d5a4"></div>
<div class="a" style="left:1677px;top:1752.2px;width:303px;height:1.8px;background:#b6d5a4"></div>
<div class="a" style="left:1554px;top:1751px;width:124px;height:3px;background:#000"></div>
<div class="pill" style="left:18px;top:1718px;width:172px;height:29px;background:#473821;border-radius:14.5px"></div>
<div class="t" style="right:1831.5px;top:1719.8px;font-size:24px;font-weight:bold;color:#ffe5a0">MLB</div>
<div class="tri" style="left:162.5px;top:1728.2px;border-left-width:7.1px;border-right-width:7.1px;border-top-width:8px;border-top-color:#ffe5a0"></div>
<div class="pill" style="left:327px;top:1718px;width:63px;height:23.6px;background:#ffe5a0;border-radius:12px"></div>
<div class="t" style="left:338px;top:1720.9px;font-size:21.5px;color:#473821">Live</div>
<div class="tri" style="left:405px;top:1729px;border-left-width:6.15px;border-right-width:6.15px;border-top-width:7px;border-top-color:#c8c8c8"></div>
<div class="cell" style="left:435px;width:120px;top:1719.5px;font-size:22.5px;color:#333">4-Jun</div>
<div class="pill" style="left:558px;top:1726px;width:130px;height:25px;background:#e8e9ec;border-radius:13px"></div>
<svg class="ico" style="left:570px;top:1727.3px" width="108" height="23" viewBox="-0.5 -0.5 108 23"><path transform="translate(0.0,0) scale(0.975,1.1)" d="M10 0 L12.4 7.2 L20 7.3 L13.9 11.8 L16.2 19 L10 14.6 L3.8 19 L6.1 11.8 L0 7.3 L7.6 7.2 Z" fill="#3a3a3a" stroke="#3a3a3a" stroke-width="0"/><path transform="translate(21.45,0) scale(0.975,1.1)" d="M10 0 L12.4 7.2 L20 7.3 L13.9 11.8 L16.2 19 L10 14.6 L3.8 19 L6.1 11.8 L0 7.3 L7.6 7.2 Z" fill="#3a3a3a" stroke="#3a3a3a" stroke-width="0"/><path transform="translate(42.9,0) scale(0.975,1.1)" d="M10 0 L12.4 7.2 L20 7.3 L13.9 11.8 L16.2 19 L10 14.6 L3.8 19 L6.1 11.8 L0 7.3 L7.6 7.2 Z" fill="#3a3a3a" stroke="#3a3a3a" stroke-width="0"/><path transform="translate(64.35,0) scale(0.975,1.1)" d="M10 0 L12.4 7.2 L20 7.3 L13.9 11.8 L16.2 19 L10 14.6 L3.8 19 L6.1 11.8 L0 7.3 L7.6 7.2 Z" fill="#3a3a3a" stroke="#3a3a3a" stroke-width="0"/><path transform="translate(85.8,0) scale(0.975,1.1)" d="M10 0 L12.4 7.2 L20 7.3 L13.9 11.8 L16.2 19 L10 14.6 L3.8 19 L6.1 11.8 L0 7.3 L7.6 7.2 Z" fill="none" stroke="#3a3a3a" stroke-width="1.3"/></svg>
<div class="cell" style="left:691px;width:530px;top:1725.81px;font-size:24.2px;color:#000">WAS+1.5</div>
<div class="cell" style="left:1221px;width:132px;top:1724.1px;font-size:27px;font-weight:bold;color:#000">$70</div>
<div class="cell" style="left:1353px;width:118px;top:1724px;font-size:27px;color:#000">1.71</div>
<div class="t" style="right:426.5px;top:1726.2px;font-size:24px;color:#000">$50</div>
<div class="pill" style="left:1568.5px;top:1720.2px;width:94.5px;height:30.4px;background:#d4edbc;border-radius:15.2px"></div>
<div class="t" style="left:1587px;top:1723.6px;font-size:27px;font-weight:bold;color:#11734b">W</div>
<div class="tri" style="left:1635px;top:1732px;border-left-width:7.8px;border-right-width:7.8px;border-top-width:8.7px;border-top-color:#11734b"></div>
<div class="cell" style="left:1677px;width:122px;top:1723.6px;font-size:27px;font-weight:bold;color:#3d85c6">0.50</div>
<div class="cell" style="left:1799px;width:181px;top:1725.4px;font-size:24.5px;color:#333">$7,164</div>
<div class="a" style="left:435px;top:1753px;width:786px;height:42px;background:#fff"></div>
<div class="a" style="left:1221px;top:1753px;width:132px;height:42px;background:#fdf0cf"></div>
<div class="a" style="left:1353px;top:1753px;width:118px;height:42px;background:#fdf0cf"></div>
<div class="a" style="left:1471px;top:1753px;width:84px;height:42px;background:#fff"></div>
<div class="a" style="left:1555px;top:1753px;width:122px;height:42px;background:#fff"></div>
<div class="a" style="left:1677px;top:1753px;width:122px;height:42px;background:#fff"></div>
<div class="a" style="left:1799px;top:1753px;width:181px;height:42px;background:#fdf0cf"></div>
<div class="a" style="left:555px;top:1794.2px;width:666px;height:1.8px;background:#b6d5a4"></div>
<div class="a" style="left:1471px;top:1794.2px;width:84px;height:1.8px;background:#b6d5a4"></div>
<div class="a" style="left:1677px;top:1794.2px;width:303px;height:1.8px;background:#b6d5a4"></div>
<div class="a" style="left:1554px;top:1793px;width:124px;height:3px;background:#000"></div>
<div class="pill" style="left:18px;top:1760px;width:172px;height:29px;background:#473821;border-radius:14.5px"></div>
<div class="t" style="right:1831.5px;top:1761.8px;font-size:24px;font-weight:bold;color:#ffe5a0">MLB</div>
<div class="tri" style="left:162.5px;top:1770.2px;border-left-width:7.1px;border-right-width:7.1px;border-top-width:8px;border-top-color:#ffe5a0"></div>
<div class="pill" style="left:327px;top:1760px;width:63px;height:23.6px;background:#ffe5a0;border-radius:12px"></div>
<div class="t" style="left:338px;top:1762.9px;font-size:21.5px;color:#473821">Live</div>
<div class="tri" style="left:405px;top:1771px;border-left-width:6.15px;border-right-width:6.15px;border-top-width:7px;border-top-color:#c8c8c8"></div>
<div class="cell" style="left:435px;width:120px;top:1761.5px;font-size:22.5px;color:#333">4-Jun</div>
<div class="pill" style="left:558px;top:1768px;width:130px;height:25px;background:#e8e9ec;border-radius:13px"></div>
<svg class="ico" style="left:570px;top:1769.3px" width="108" height="23" viewBox="-0.5 -0.5 108 23"><path transform="translate(0.0,0) scale(0.975,1.1)" d="M10 0 L12.4 7.2 L20 7.3 L13.9 11.8 L16.2 19 L10 14.6 L3.8 19 L6.1 11.8 L0 7.3 L7.6 7.2 Z" fill="#3a3a3a" stroke="#3a3a3a" stroke-width="0"/><path transform="translate(21.45,0) scale(0.975,1.1)" d="M10 0 L12.4 7.2 L20 7.3 L13.9 11.8 L16.2 19 L10 14.6 L3.8 19 L6.1 11.8 L0 7.3 L7.6 7.2 Z" fill="#3a3a3a" stroke="#3a3a3a" stroke-width="0"/><path transform="translate(42.9,0) scale(0.975,1.1)" d="M10 0 L12.4 7.2 L20 7.3 L13.9 11.8 L16.2 19 L10 14.6 L3.8 19 L6.1 11.8 L0 7.3 L7.6 7.2 Z" fill="#3a3a3a" stroke="#3a3a3a" stroke-width="0"/><path transform="translate(64.35,0) scale(0.975,1.1)" d="M10 0 L12.4 7.2 L20 7.3 L13.9 11.8 L16.2 19 L10 14.6 L3.8 19 L6.1 11.8 L0 7.3 L7.6 7.2 Z" fill="#3a3a3a" stroke="#3a3a3a" stroke-width="0"/><path transform="translate(85.8,0) scale(0.975,1.1)" d="M10 0 L12.4 7.2 L20 7.3 L13.9 11.8 L16.2 19 L10 14.6 L3.8 19 L6.1 11.8 L0 7.3 L7.6 7.2 Z" fill="none" stroke="#3a3a3a" stroke-width="1.3"/></svg>
<div class="cell" style="left:691px;width:530px;top:1767.81px;font-size:24.2px;color:#000">PIT+1.5</div>
<div class="cell" style="left:1221px;width:132px;top:1766.1px;font-size:27px;font-weight:bold;color:#000">$70</div>
<div class="cell" style="left:1353px;width:118px;top:1766px;font-size:27px;color:#000">1.66</div>
<div class="t" style="right:426.5px;top:1768.2px;font-size:24px;color:#000">$46</div>
<div class="pill" style="left:1568.5px;top:1762.2px;width:94.5px;height:30.4px;background:#d4edbc;border-radius:15.2px"></div>
<div class="t" style="left:1587px;top:1765.6px;font-size:27px;font-weight:bold;color:#11734b">W</div>
<div class="tri" style="left:1635px;top:1774px;border-left-width:7.8px;border-right-width:7.8px;border-top-width:8.7px;border-top-color:#11734b"></div>
<div class="cell" style="left:1677px;width:122px;top:1765.6px;font-size:27px;font-weight:bold;color:#3d85c6">0.46</div>
<div class="cell" style="left:1799px;width:181px;top:1767.4px;font-size:24.5px;color:#333">$7,211</div>
<div class="a" style="left:435px;top:1795px;width:786px;height:42px;background:#fff"></div>
<div class="a" style="left:1221px;top:1795px;width:132px;height:42px;background:#fdf0cf"></div>
<div class="a" style="left:1353px;top:1795px;width:118px;height:42px;background:#fdf0cf"></div>
<div class="a" style="left:1471px;top:1795px;width:84px;height:42px;background:#fff"></div>
<div class="a" style="left:1555px;top:1795px;width:122px;height:42px;background:#fff"></div>
<div class="a" style="left:1677px;top:1795px;width:122px;height:42px;background:#fff"></div>
<div class="a" style="left:1799px;top:1795px;width:181px;height:42px;background:#fdf0cf"></div>
<div class="a" style="left:555px;top:1836.2px;width:666px;height:1.8px;background:#b6d5a4"></div>
<div class="a" style="left:1471px;top:1836.2px;width:84px;height:1.8px;background:#b6d5a4"></div>
<div class="a" style="left:1677px;top:1836.2px;width:303px;height:1.8px;background:#b6d5a4"></div>
<div class="a" style="left:1554px;top:1835px;width:124px;height:3px;background:#000"></div>
<div class="pill" style="left:18px;top:1802px;width:172px;height:29px;background:#215a6c;border-radius:14.5px"></div>
<div class="t" style="right:1831.5px;top:1803.8px;font-size:24px;font-weight:bold;color:#c6dbe1">Squash</div>
<div class="tri" style="left:162.5px;top:1812.2px;border-left-width:7.1px;border-right-width:7.1px;border-top-width:8px;border-top-color:#c6dbe1"></div>
<div class="pill" style="left:327px;top:1802px;width:63px;height:23.6px;background:#ffe5a0;border-radius:12px"></div>
<div class="t" style="left:338px;top:1804.9px;font-size:21.5px;color:#473821">Live</div>
<div class="tri" style="left:405px;top:1813px;border-left-width:6.15px;border-right-width:6.15px;border-top-width:7px;border-top-color:#c8c8c8"></div>
<div class="cell" style="left:435px;width:120px;top:1803.5px;font-size:22.5px;color:#333">4-Jun</div>
<div class="pill" style="left:558px;top:1810px;width:130px;height:25px;background:#e8e9ec;border-radius:13px"></div>
<svg class="ico" style="left:570px;top:1811.3px" width="108" height="23" viewBox="-0.5 -0.5 108 23"><path transform="translate(0.0,0) scale(0.975,1.1)" d="M10 0 L12.4 7.2 L20 7.3 L13.9 11.8 L16.2 19 L10 14.6 L3.8 19 L6.1 11.8 L0 7.3 L7.6 7.2 Z" fill="#3a3a3a" stroke="#3a3a3a" stroke-width="0"/><path transform="translate(21.45,0) scale(0.975,1.1)" d="M10 0 L12.4 7.2 L20 7.3 L13.9 11.8 L16.2 19 L10 14.6 L3.8 19 L6.1 11.8 L0 7.3 L7.6 7.2 Z" fill="#3a3a3a" stroke="#3a3a3a" stroke-width="0"/><path transform="translate(42.9,0) scale(0.975,1.1)" d="M10 0 L12.4 7.2 L20 7.3 L13.9 11.8 L16.2 19 L10 14.6 L3.8 19 L6.1 11.8 L0 7.3 L7.6 7.2 Z" fill="#3a3a3a" stroke="#3a3a3a" stroke-width="0"/><path transform="translate(64.35,0) scale(0.975,1.1)" d="M10 0 L12.4 7.2 L20 7.3 L13.9 11.8 L16.2 19 L10 14.6 L3.8 19 L6.1 11.8 L0 7.3 L7.6 7.2 Z" fill="#3a3a3a" stroke="#3a3a3a" stroke-width="0"/><path transform="translate(85.8,0) scale(0.975,1.1)" d="M10 0 L12.4 7.2 L20 7.3 L13.9 11.8 L16.2 19 L10 14.6 L3.8 19 L6.1 11.8 L0 7.3 L7.6 7.2 Z" fill="none" stroke="#3a3a3a" stroke-width="1.3"/></svg>
<div class="cell" style="left:691px;width:530px;top:1809.81px;font-size:24.2px;color:#000"></div>
<div class="cell" style="left:1221px;width:132px;top:1808.1px;font-size:27px;font-weight:bold;color:#000">$70</div>
<div class="cell" style="left:1353px;width:118px;top:1808px;font-size:27px;color:#000">1.50</div>
<div class="t" style="right:426.5px;top:1810.2px;font-size:24px;color:#000">$35</div>
<div class="pill" style="left:1568.5px;top:1804.2px;width:94.5px;height:30.4px;background:#d4edbc;border-radius:15.2px"></div>
<div class="t" style="left:1587px;top:1807.6px;font-size:27px;font-weight:bold;color:#11734b">W</div>
<div class="tri" style="left:1635px;top:1816px;border-left-width:7.8px;border-right-width:7.8px;border-top-width:8.7px;border-top-color:#11734b"></div>
<div class="cell" style="left:1677px;width:122px;top:1807.6px;font-size:27px;font-weight:bold;color:#3d85c6">0.35</div>
<div class="cell" style="left:1799px;width:181px;top:1809.4px;font-size:24.5px;color:#333">$7,246</div>
<div class="a" style="left:554px;top:535px;width:1.6px;height:1269px;background:#b6d7a8"></div>
<div class="a" style="left:690px;top:535px;width:1.6px;height:1269px;background:#b6d7a8"></div>
<div class="a" style="left:1220px;top:535px;width:1.6px;height:1269px;background:#b6d7a8"></div>
<div class="a" style="left:1554px;top:535px;width:1.6px;height:1269px;background:#b6d7a8"></div>
<div class="a" style="left:1798px;top:535px;width:1.6px;height:1269px;background:#b6d7a8"></div>
<svg class="ico" style="left:0;top:0;width:1980px;height:1804px;pointer-events:none" width="1980" height="1804"><ellipse cx="1369.5" cy="263.3" rx="214" ry="94.2" fill="none" stroke="#f7851e" stroke-width="9.6" transform="rotate(-1 1369.5 263.3)"/></svg></body></html>
